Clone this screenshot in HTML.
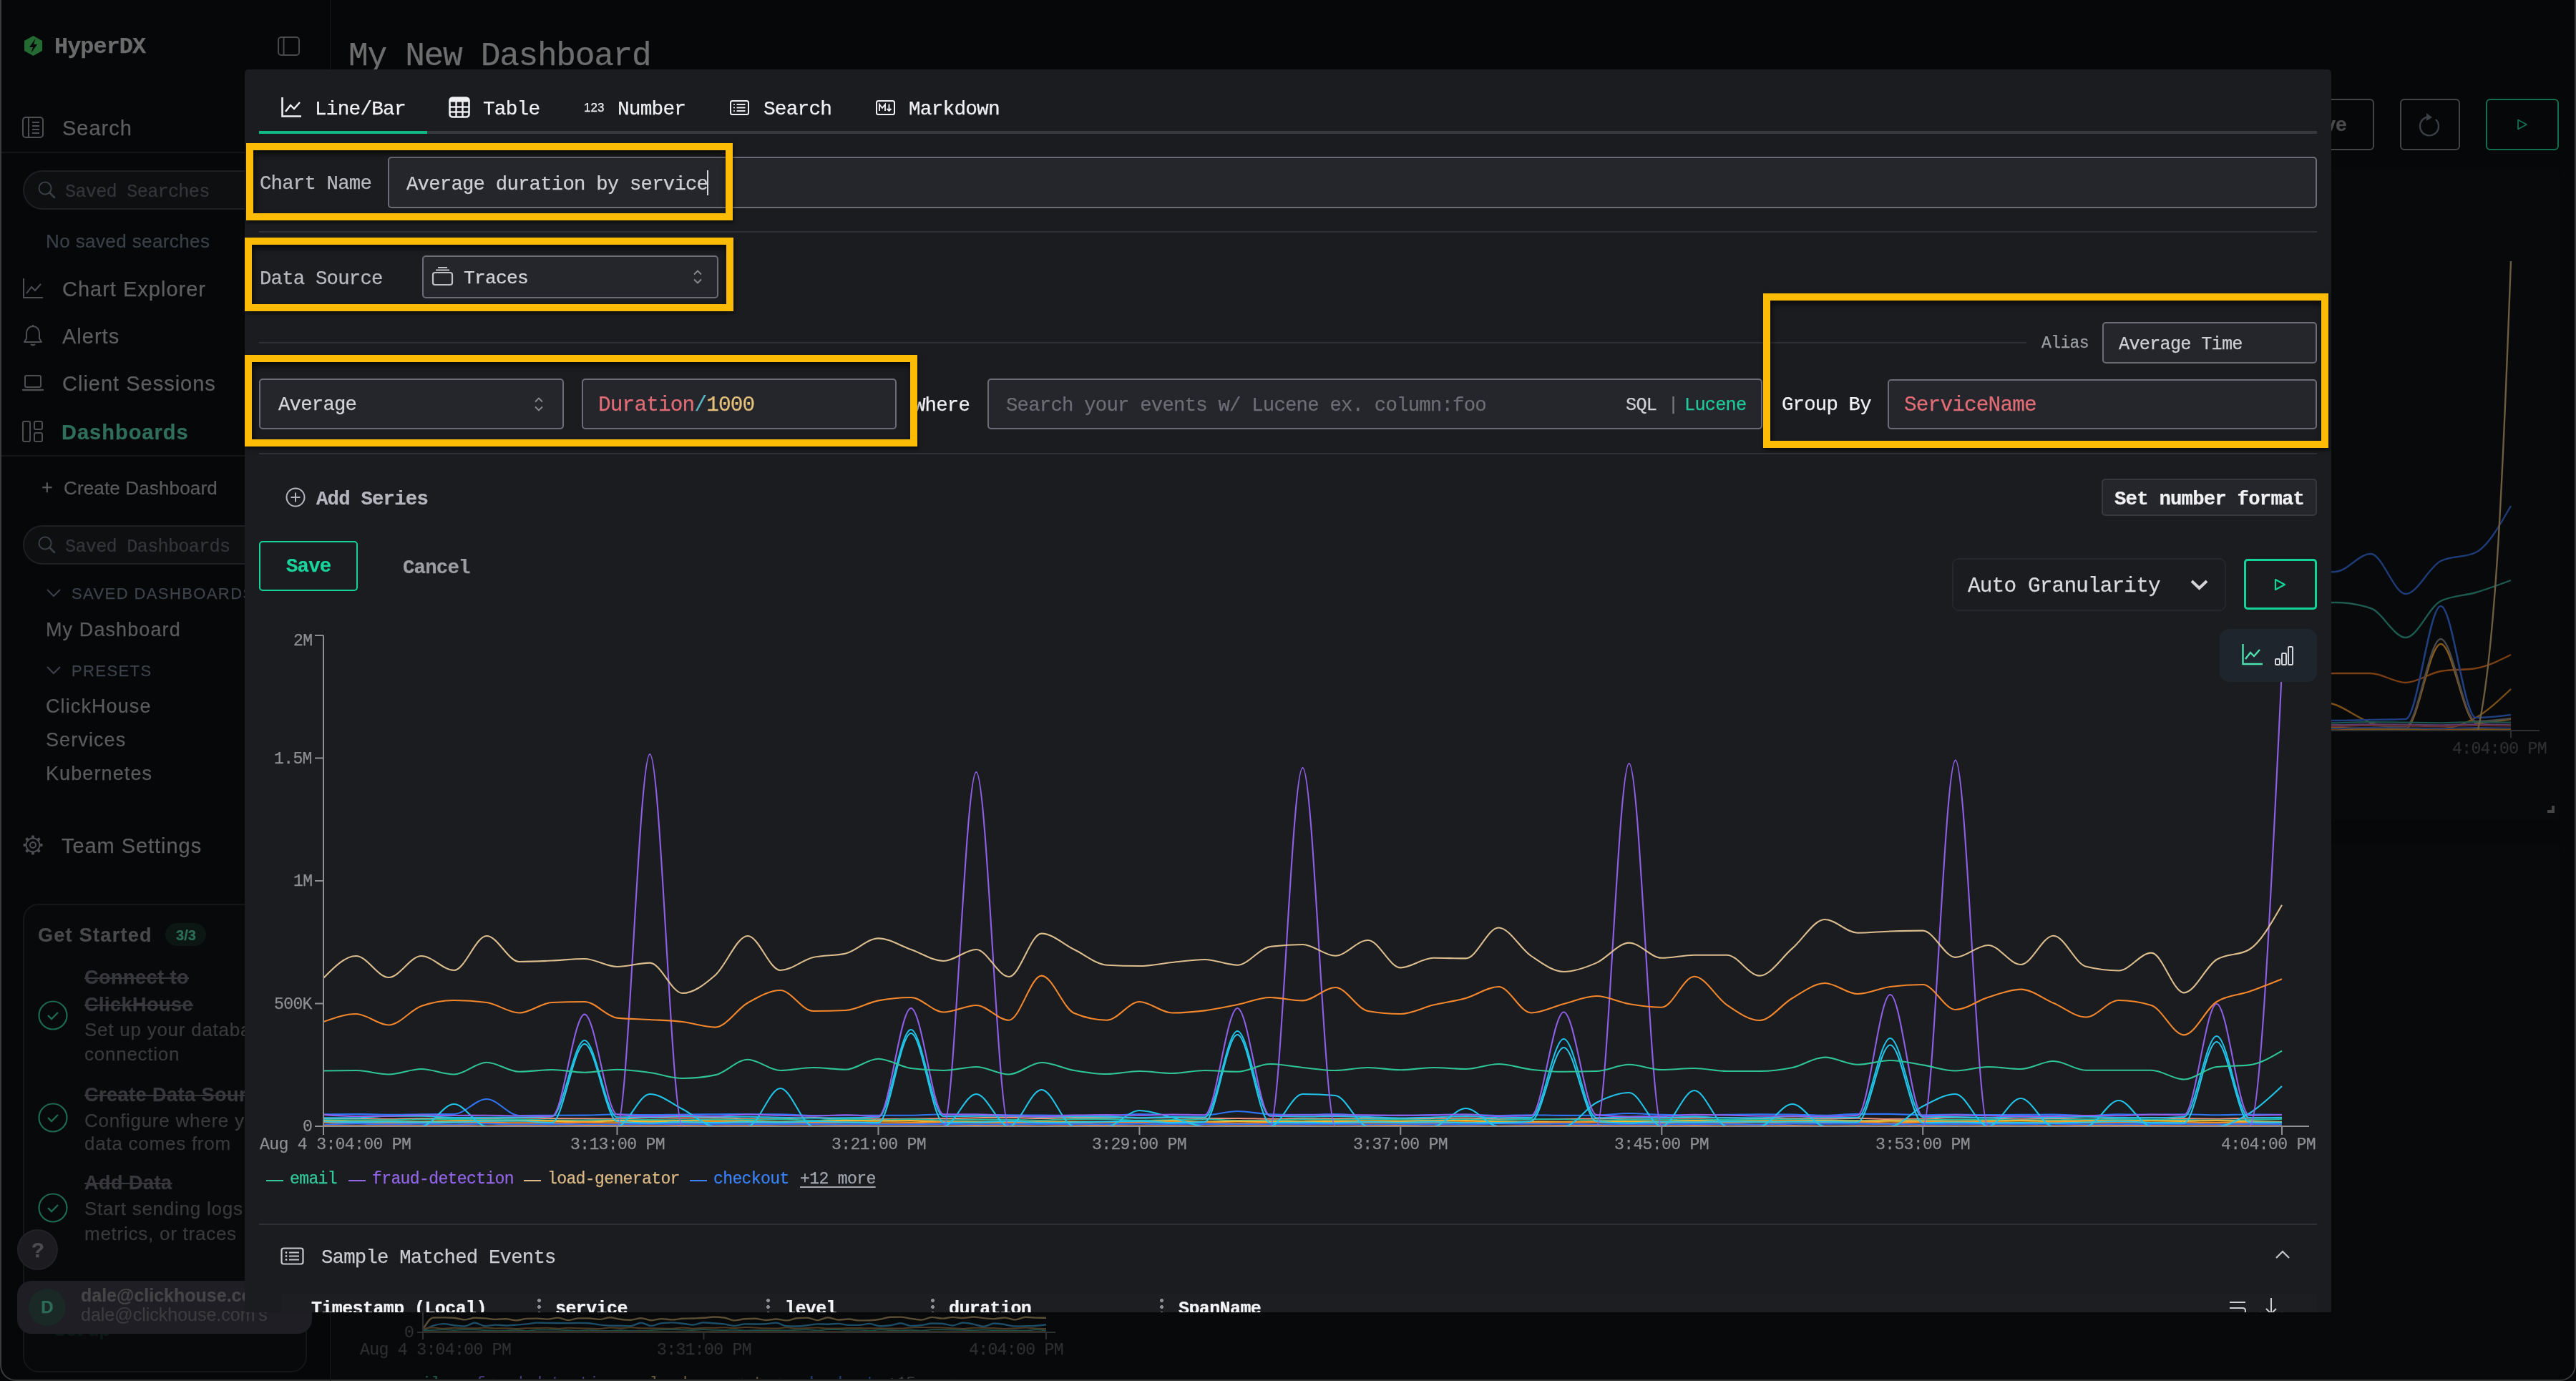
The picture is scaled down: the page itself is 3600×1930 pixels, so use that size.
<!DOCTYPE html><html><head><meta charset="utf-8"><style>
html,body{margin:0;padding:0;}
body{width:3600px;height:1930px;overflow:hidden;background:#060709;position:relative;}
.t{position:absolute;white-space:pre;-webkit-text-stroke:0.25px currentColor;will-change:transform;}
.b{position:absolute;box-sizing:border-box;}
.s{position:absolute;overflow:visible;}
</style></head><body>
<div class="b" style="left:0px;top:-40px;width:3600px;height:1970px;border:2px solid #3a3b3b;border-top:none;border-radius:0 0 22px 22px;"></div>
<div class="b" style="left:461px;top:0px;width:1px;height:1930px;background:#17181b;"></div>
<div class="b" style="left:2px;top:212px;width:459px;height:2px;background:#141517;"></div>
<div class="b" style="left:2px;top:636px;width:459px;height:2px;background:#141517;"></div>
<svg class="s" style="left:33px;top:49px;" width="27" height="30" viewBox="0 0 27 30"><polygon points="13.5,1 26,8 26,22 13.5,29 1,22 1,8" fill="#246a33"/><path d="M16.5,5 L8,17 L13,17 L10.5,25 L19,13 L14,13 Z" fill="#060709"/></svg>
<div class="t" style="left:76.0px;top:50.6px;font:700 31.815px/31.815px 'Liberation Mono', monospace;color:#6b6b6b;letter-spacing:-0.91px;">HyperDX</div>
<svg class="s" style="left:387px;top:50px;" width="33" height="29" viewBox="0 0 33 29"><rect x="2" y="2" width="29" height="25" rx="4" fill="none" stroke="#4a4a4b" stroke-width="2"/><line x1="9.5" y1="2" x2="9.5" y2="27" stroke="#4a4a4b" stroke-width="2"/></svg>
<svg class="s" style="left:30px;top:162px;" width="32" height="32" viewBox="0 0 32 32"><rect x="2" y="2" width="28" height="28" rx="4" fill="none" stroke="#4c4e52" stroke-width="2"/><line x1="10" y1="2" x2="10" y2="30" stroke="#4c4e52" stroke-width="2"/><line x1="15" y1="9" x2="25" y2="9" stroke="#4c4e52" stroke-width="2"/><line x1="15" y1="14" x2="25" y2="14" stroke="#4c4e52" stroke-width="2"/><line x1="15" y1="19" x2="25" y2="19" stroke="#4c4e52" stroke-width="2"/><line x1="15" y1="24" x2="25" y2="24" stroke="#4c4e52" stroke-width="2"/></svg>
<div class="t" style="left:87.0px;top:165.4px;font:400 29px/29px 'Liberation Sans', sans-serif;color:#5e5e5f;letter-spacing:1px;">Search</div>
<div class="b" style="left:32px;top:238px;width:420px;height:55px;border:2px solid #1e1f22;border-radius:28px;background:#0e0f11;"></div>
<svg class="s" style="left:52px;top:253px;" width="28" height="26" viewBox="0 0 28 26"><circle cx="11" cy="10" r="8.5" fill="none" stroke="#3a3f46" stroke-width="2"/><line x1="17" y1="16" x2="24" y2="23" stroke="#3a3f46" stroke-width="2.5" stroke-linecap="round"/></svg>
<div class="t" style="left:91.0px;top:255.7px;font:400 25.200000000000003px/25.200000000000003px 'Liberation Mono', monospace;color:#34363a;letter-spacing:-0.72px;">Saved Searches</div>
<div class="t" style="left:64.0px;top:324.0px;font:400 26px/26px 'Liberation Sans', sans-serif;color:#3a4048;letter-spacing:0.4px;">No saved searches</div>
<svg class="s" style="left:30px;top:387px;" width="32" height="32" viewBox="0 0 32 32"><path d="M3,2 V29 H30" fill="none" stroke="#4c4e52" stroke-width="2"/><path d="M7,23 L14,14 L19,19 L27,10" fill="none" stroke="#4c4e52" stroke-width="2"/></svg>
<div class="t" style="left:87.0px;top:390.4px;font:400 29px/29px 'Liberation Sans', sans-serif;color:#5e5e5f;letter-spacing:1px;">Chart Explorer</div>
<svg class="s" style="left:32px;top:453px;" width="28" height="32" viewBox="0 0 28 32"><path d="M14,3 C8,3 5,8 5,13 V20 L2,25 H26 L23,20 V13 C23,8 20,3 14,3 Z" fill="none" stroke="#4c4e52" stroke-width="2" stroke-linejoin="round"/><path d="M11,28 Q14,31 17,28" fill="#4c4e52" stroke="#4c4e52" stroke-width="2"/><line x1="14" y1="1" x2="14" y2="3" stroke="#4c4e52" stroke-width="2"/></svg>
<div class="t" style="left:87.0px;top:456.4px;font:400 29px/29px 'Liberation Sans', sans-serif;color:#5e5e5f;letter-spacing:1px;">Alerts</div>
<svg class="s" style="left:30px;top:522px;" width="32" height="28" viewBox="0 0 32 28"><rect x="5" y="3" width="22" height="16" rx="2" fill="none" stroke="#4c4e52" stroke-width="2"/><line x1="2" y1="23" x2="30" y2="23" stroke="#4c4e52" stroke-width="2.4" stroke-linecap="round"/></svg>
<div class="t" style="left:87.0px;top:522.4px;font:400 29px/29px 'Liberation Sans', sans-serif;color:#5e5e5f;letter-spacing:1px;">Client Sessions</div>
<svg class="s" style="left:30px;top:587px;" width="32" height="32" viewBox="0 0 32 32"><rect x="2" y="2" width="10" height="28" rx="2" fill="none" stroke="#4c4e52" stroke-width="2"/><rect x="18" y="2" width="11" height="11" rx="2" fill="none" stroke="#4c4e52" stroke-width="2"/><rect x="18" y="18" width="11" height="12" rx="2" fill="none" stroke="#4c4e52" stroke-width="2"/></svg>
<div class="t" style="left:86.0px;top:590.4px;font:700 29px/29px 'Liberation Sans', sans-serif;color:#2e6e5b;letter-spacing:1px;">Dashboards</div>
<div class="t" style="left:58.0px;top:668.1px;font:400 27px/27px 'Liberation Sans', sans-serif;color:#5a5a5b;">+</div>
<div class="t" style="left:89.0px;top:669.0px;font:400 26px/26px 'Liberation Sans', sans-serif;color:#5a5a5b;letter-spacing:0.15px;">Create Dashboard</div>
<div class="b" style="left:32px;top:734px;width:420px;height:55px;border:2px solid #1e1f22;border-radius:28px;background:#0e0f11;"></div>
<svg class="s" style="left:52px;top:749px;" width="28" height="26" viewBox="0 0 28 26"><circle cx="11" cy="10" r="8.5" fill="none" stroke="#3a3f46" stroke-width="2"/><line x1="17" y1="16" x2="24" y2="23" stroke="#3a3f46" stroke-width="2.5" stroke-linecap="round"/></svg>
<div class="t" style="left:91.0px;top:751.7px;font:400 25.200000000000003px/25.200000000000003px 'Liberation Mono', monospace;color:#34363a;letter-spacing:-0.72px;">Saved Dashboards</div>
<svg class="s" style="left:64px;top:822px;" width="22" height="14" viewBox="0 0 22 14"><path d="M2,2 L11,11 L20,2" fill="none" stroke="#3d434b" stroke-width="2"/></svg>
<div class="t" style="left:100.0px;top:819.4px;font:400 22px/22px 'Liberation Sans', sans-serif;color:#3d434b;letter-spacing:1.4px;">SAVED DASHBOARDS</div>
<div class="t" style="left:64.0px;top:867.1px;font:400 27px/27px 'Liberation Sans', sans-serif;color:#5a5b5d;letter-spacing:1.1px;">My Dashboard</div>
<svg class="s" style="left:64px;top:930px;" width="22" height="14" viewBox="0 0 22 14"><path d="M2,2 L11,11 L20,2" fill="none" stroke="#3d434b" stroke-width="2"/></svg>
<div class="t" style="left:100.0px;top:927.4px;font:400 22px/22px 'Liberation Sans', sans-serif;color:#3d434b;letter-spacing:1.4px;">PRESETS</div>
<div class="t" style="left:64.0px;top:974.1px;font:400 27px/27px 'Liberation Sans', sans-serif;color:#5a5b5d;letter-spacing:1.1px;">ClickHouse</div>
<div class="t" style="left:64.0px;top:1021.1px;font:400 27px/27px 'Liberation Sans', sans-serif;color:#5a5b5d;letter-spacing:1.1px;">Services</div>
<div class="t" style="left:64.0px;top:1068.1px;font:400 27px/27px 'Liberation Sans', sans-serif;color:#5a5b5d;letter-spacing:1.1px;">Kubernetes</div>
<svg class="s" style="left:32px;top:1167px;" width="28" height="28" viewBox="0 0 28 28"><rect x="12" y="0.5" width="4" height="6" rx="1" transform="rotate(0 14 14)" fill="#4c4e52"/><rect x="12" y="0.5" width="4" height="6" rx="1" transform="rotate(45 14 14)" fill="#4c4e52"/><rect x="12" y="0.5" width="4" height="6" rx="1" transform="rotate(90 14 14)" fill="#4c4e52"/><rect x="12" y="0.5" width="4" height="6" rx="1" transform="rotate(135 14 14)" fill="#4c4e52"/><rect x="12" y="0.5" width="4" height="6" rx="1" transform="rotate(180 14 14)" fill="#4c4e52"/><rect x="12" y="0.5" width="4" height="6" rx="1" transform="rotate(225 14 14)" fill="#4c4e52"/><rect x="12" y="0.5" width="4" height="6" rx="1" transform="rotate(270 14 14)" fill="#4c4e52"/><rect x="12" y="0.5" width="4" height="6" rx="1" transform="rotate(315 14 14)" fill="#4c4e52"/><circle cx="14" cy="14" r="9.5" fill="#060709" stroke="#4c4e52" stroke-width="2"/><circle cx="14" cy="14" r="4" fill="none" stroke="#4c4e52" stroke-width="2"/></svg>
<div class="t" style="left:86.0px;top:1168.4px;font:400 29px/29px 'Liberation Sans', sans-serif;color:#5e5e5f;letter-spacing:0.95px;">Team Settings</div>
<div class="b" style="left:32px;top:1263px;width:397px;height:655px;border:2px solid #151618;border-radius:22px;background:#08090a;"></div>
<div class="t" style="left:53.0px;top:1294.1px;font:700 27px/27px 'Liberation Sans', sans-serif;color:#4a4a4d;letter-spacing:1.3px;">Get Started</div>
<div class="b" style="left:231px;top:1290px;width:57px;height:32px;background:#0c1613;border-radius:16px;"></div>
<div class="t" style="left:-740.5px;width:2000px;text-align:center;top:1297.1px;font:700 20px/20px 'Liberation Sans', sans-serif;color:#2b6f57;">3/3</div>
<svg class="s" style="left:53px;top:1398px;" width="42" height="42" viewBox="0 0 42 42"><circle cx="21" cy="21" r="19.5" fill="none" stroke="#1d6a4f" stroke-width="2.2"/><path d="M14,21 L19,26 L28,17" fill="none" stroke="#1d6a4f" stroke-width="2.4"/></svg>
<div class="t" style="left:118.0px;top:1353.1px;font:700 27px/27px 'Liberation Sans', sans-serif;color:#38383c;text-decoration:line-through;text-decoration-thickness:2px;letter-spacing:0.5px;">Connect to</div>
<div class="t" style="left:118.0px;top:1391.1px;font:700 27px/27px 'Liberation Sans', sans-serif;color:#38383c;text-decoration:line-through;text-decoration-thickness:2px;letter-spacing:0.5px;">ClickHouse</div>
<div class="t" style="left:118.0px;top:1426.0px;font:400 26px/26px 'Liberation Sans', sans-serif;color:#3a3a3d;letter-spacing:0.75px;">Set up your database</div>
<div class="t" style="left:118.0px;top:1460.0px;font:400 26px/26px 'Liberation Sans', sans-serif;color:#3a3a3d;letter-spacing:0.75px;">connection</div>
<svg class="s" style="left:53px;top:1541px;" width="42" height="42" viewBox="0 0 42 42"><circle cx="21" cy="21" r="19.5" fill="none" stroke="#1d6a4f" stroke-width="2.2"/><path d="M14,21 L19,26 L28,17" fill="none" stroke="#1d6a4f" stroke-width="2.4"/></svg>
<div class="t" style="left:118.0px;top:1517.1px;font:700 27px/27px 'Liberation Sans', sans-serif;color:#38383c;text-decoration:line-through;text-decoration-thickness:2px;letter-spacing:0.5px;">Create Data Source</div>
<div class="t" style="left:118.0px;top:1553.0px;font:400 26px/26px 'Liberation Sans', sans-serif;color:#3a3a3d;letter-spacing:0.75px;">Configure where your</div>
<div class="t" style="left:118.0px;top:1585.0px;font:400 26px/26px 'Liberation Sans', sans-serif;color:#3a3a3d;letter-spacing:0.75px;">data comes from</div>
<svg class="s" style="left:53px;top:1667px;" width="42" height="42" viewBox="0 0 42 42"><circle cx="21" cy="21" r="19.5" fill="none" stroke="#1d6a4f" stroke-width="2.2"/><path d="M14,21 L19,26 L28,17" fill="none" stroke="#1d6a4f" stroke-width="2.4"/></svg>
<div class="t" style="left:118.0px;top:1640.1px;font:700 27px/27px 'Liberation Sans', sans-serif;color:#38383c;text-decoration:line-through;text-decoration-thickness:2px;letter-spacing:0.5px;">Add Data</div>
<div class="t" style="left:118.0px;top:1676.0px;font:400 26px/26px 'Liberation Sans', sans-serif;color:#3a3a3d;letter-spacing:0.75px;">Start sending logs,</div>
<div class="t" style="left:118.0px;top:1711.0px;font:400 26px/26px 'Liberation Sans', sans-serif;color:#3a3a3d;letter-spacing:0.75px;">metrics, or traces</div>
<div class="t" style="left:75.0px;top:1845.0px;font:700 26px/26px 'Liberation Sans', sans-serif;color:#0c1a15;">Set up</div>
<div class="b" style="left:24px;top:1718px;width:57px;height:57px;border-radius:50%;background:#1c1c20;border:2px solid #222226;"></div>
<div class="t" style="left:-947.5px;width:2000px;text-align:center;top:1731.6px;font:700 30px/30px 'Liberation Sans', sans-serif;color:#4d4d50;">?</div>
<div class="b" style="left:24px;top:1790px;width:412px;height:74px;background:#1e1e24;border-radius:20px;"></div>
<div class="b" style="left:40px;top:1801px;width:52px;height:52px;background:#1b2926;border-radius:50%;"></div>
<div class="t" style="left:-934.0px;width:2000px;text-align:center;top:1814.7px;font:700 24px/24px 'Liberation Sans', sans-serif;color:#2d6b59;">D</div>
<div class="t" style="left:113.0px;top:1797.8px;font:700 25px/25px 'Liberation Sans', sans-serif;color:#454548;">dale@clickhouse.com</div>
<div class="t" style="left:113.0px;top:1824.8px;font:400 25px/25px 'Liberation Sans', sans-serif;color:#3c3c3f;">dale@clickhouse.com&#x27;s</div>
<div class="t" style="left:487.0px;top:55.6px;font:400 46.2px/46.2px 'Liberation Mono', monospace;color:#6c6d6c;letter-spacing:-1.32px;">My New Dashboard</div>
<div class="b" style="left:3180px;top:138px;width:138px;height:72px;border:2px solid #434446;border-radius:6px;"></div>
<div class="t" style="left:2247.0px;width:2000px;text-align:center;top:160.3px;font:700 28px/28px 'Liberation Sans', sans-serif;color:#4a4a4c;">Save</div>
<div class="b" style="left:3354px;top:138px;width:84px;height:72px;border:2px solid #434446;border-radius:6px;"></div>
<svg class="s" style="left:3380px;top:155px;" width="34" height="38" viewBox="0 0 34 38"><path d="M24,12 A13,13 0 1 1 13,8.5" fill="none" stroke="#3c4148" stroke-width="2.4"/><path d="M11,3 L19,9 L11,14 Z" fill="#3c4148"/></svg>
<div class="b" style="left:3474px;top:138px;width:102px;height:72px;border:2px solid #13704e;border-radius:6px;"></div>
<svg class="s" style="left:3517px;top:166px;" width="16" height="16" viewBox="0 0 16 16"><path d="M2,1.5 L14,8 L2,14.5 Z" fill="none" stroke="#13704e" stroke-width="1.8" stroke-linejoin="round"/></svg>
<div class="b" style="left:470px;top:236px;width:3107px;height:910px;background:#08090b;border-radius:6px;"></div>
<div class="b" style="left:462px;top:1180px;width:3115px;height:747px;background:#08090b;border-radius:6px;"></div>
<div class="b" style="left:3560px;top:1126px;width:10px;height:10px;background:#454546;clip-path:polygon(100% 0,100% 100%,0 100%,0 60%,60% 60%,60% 0);"></div>
<svg class="s" style="left:0;top:0" width="3600" height="1930" viewBox="0 0 3600 1930"><path d="M3166.0,985.0C3182.3,980.0 3198.7,975.0 3215.0,975.0C3231.3,975.0 3247.7,979.2 3264.0,985.0C3280.3,990.8 3296.7,1004.7 3313.0,1010.0C3329.3,1015.3 3345.7,1018.0 3362.0,1018.0C3378.3,1018.0 3394.7,1018.0 3411.0,1018.0C3427.3,1018.0 3443.7,1012.2 3460.0,1003.0C3476.3,993.8 3492.7,978.4 3509.0,963.0" fill="none" stroke="#7a4f18" stroke-width="2.4"/><path d="M3166.0,945.0C3182.3,944.3 3198.7,943.7 3215.0,943.0C3231.3,942.3 3247.7,941.0 3264.0,941.0C3280.3,941.0 3296.7,941.0 3313.0,941.0C3329.3,941.0 3345.7,954.0 3362.0,954.0C3378.3,954.0 3394.7,940.7 3411.0,938.0C3427.3,935.3 3443.7,936.7 3460.0,934.0C3476.3,931.3 3492.7,923.2 3509.0,915.0" fill="none" stroke="#7b3f14" stroke-width="2.4"/><path d="M3166.0,845.0C3182.3,844.2 3198.7,843.5 3215.0,843.0C3231.3,842.5 3247.7,842.0 3264.0,842.0C3280.3,842.0 3296.7,844.7 3313.0,850.0C3329.3,855.3 3345.7,891.0 3362.0,891.0C3378.3,891.0 3394.7,848.0 3411.0,840.0C3427.3,832.0 3443.7,832.8 3460.0,828.0C3476.3,823.2 3492.7,817.1 3509.0,811.0" fill="none" stroke="#1d5a50" stroke-width="2.4"/><path d="M3166.0,805.0C3182.3,802.8 3198.7,800.7 3215.0,800.0C3231.3,799.3 3247.7,799.7 3264.0,799.0C3280.3,798.3 3296.7,774.0 3313.0,774.0C3329.3,774.0 3345.7,830.0 3362.0,830.0C3378.3,830.0 3394.7,792.0 3411.0,784.0C3427.3,776.0 3443.7,780.0 3460.0,772.0C3476.3,764.0 3492.7,735.5 3509.0,707.0" fill="none" stroke="#1e3d78" stroke-width="2.4"/><path d="M3166.0,1016.0C3182.3,1016.0 3198.7,1016.0 3215.0,1016.0C3231.3,1016.0 3247.7,1016.7 3264.0,1017.0C3280.3,1017.3 3296.7,1018.0 3313.0,1018.0C3329.3,1018.0 3345.7,1018.0 3362.0,1018.0C3378.3,1018.0 3394.7,900.0 3411.0,900.0C3427.3,900.0 3443.7,1010.0 3460.0,1010.0C3476.3,1010.0 3492.7,1007.5 3509.0,1005.0" fill="none" stroke="#8a5a18" stroke-width="2.4"/><path d="M3166.0,1012.0C3182.3,1012.0 3198.7,1012.0 3215.0,1012.0C3231.3,1012.0 3247.7,1012.7 3264.0,1013.0C3280.3,1013.3 3296.7,1013.7 3313.0,1014.0C3329.3,1014.3 3345.7,1015.0 3362.0,1015.0C3378.3,1015.0 3394.7,893.0 3411.0,893.0C3427.3,893.0 3443.7,1008.0 3460.0,1008.0C3476.3,1008.0 3492.7,1006.0 3509.0,1004.0" fill="none" stroke="#4a4a4c" stroke-width="2.4"/><path d="M3166.0,1006.0C3182.3,1006.0 3198.7,1006.0 3215.0,1006.0C3231.3,1006.0 3247.7,1007.0 3264.0,1007.0C3280.3,1007.0 3296.7,1006.3 3313.0,1006.0C3329.3,1005.7 3345.7,1005.7 3362.0,1005.0C3378.3,1004.3 3394.7,847.0 3411.0,847.0C3427.3,847.0 3443.7,1003.0 3460.0,1003.0C3476.3,1003.0 3492.7,1001.0 3509.0,999.0" fill="none" stroke="#1f3f80" stroke-width="2.6"/><path d="M3166.0,1009.0C3182.3,1009.2 3198.7,1009.4 3215.0,1009.6C3231.3,1009.8 3247.7,1010.2 3264.0,1010.2C3280.3,1010.2 3296.7,1009.0 3313.0,1009.0C3329.3,1009.0 3345.7,1009.4 3362.0,1009.6C3378.3,1009.8 3394.7,1010.2 3411.0,1010.2C3427.3,1010.2 3443.7,1009.0 3460.0,1009.0C3476.3,1009.0 3492.7,1009.3 3509.0,1009.6" fill="none" stroke="#1d5a50" stroke-width="2"/><path d="M3166.0,1012.0C3182.3,1012.2 3198.7,1012.4 3215.0,1012.6C3231.3,1012.8 3247.7,1013.2 3264.0,1013.2C3280.3,1013.2 3296.7,1012.0 3313.0,1012.0C3329.3,1012.0 3345.7,1012.4 3362.0,1012.6C3378.3,1012.8 3394.7,1013.2 3411.0,1013.2C3427.3,1013.2 3443.7,1012.0 3460.0,1012.0C3476.3,1012.0 3492.7,1012.3 3509.0,1012.6" fill="none" stroke="#5a3a6a" stroke-width="2"/><path d="M3166.0,1014.0C3182.3,1014.2 3198.7,1014.4 3215.0,1014.6C3231.3,1014.8 3247.7,1015.2 3264.0,1015.2C3280.3,1015.2 3296.7,1014.0 3313.0,1014.0C3329.3,1014.0 3345.7,1014.4 3362.0,1014.6C3378.3,1014.8 3394.7,1015.2 3411.0,1015.2C3427.3,1015.2 3443.7,1014.0 3460.0,1014.0C3476.3,1014.0 3492.7,1014.3 3509.0,1014.6" fill="none" stroke="#6a3030" stroke-width="2"/><path d="M3166.0,1017.0C3182.3,1017.2 3198.7,1017.4 3215.0,1017.6C3231.3,1017.8 3247.7,1018.2 3264.0,1018.2C3280.3,1018.2 3296.7,1017.0 3313.0,1017.0C3329.3,1017.0 3345.7,1017.4 3362.0,1017.6C3378.3,1017.8 3394.7,1018.2 3411.0,1018.2C3427.3,1018.2 3443.7,1017.0 3460.0,1017.0C3476.3,1017.0 3492.7,1017.3 3509.0,1017.6" fill="none" stroke="#1e3d78" stroke-width="2"/><path d="M3166.0,1019.0C3182.3,1019.2 3198.7,1019.4 3215.0,1019.6C3231.3,1019.8 3247.7,1020.2 3264.0,1020.2C3280.3,1020.2 3296.7,1019.0 3313.0,1019.0C3329.3,1019.0 3345.7,1019.4 3362.0,1019.6C3378.3,1019.8 3394.7,1020.2 3411.0,1020.2C3427.3,1020.2 3443.7,1019.0 3460.0,1019.0C3476.3,1019.0 3492.7,1019.3 3509.0,1019.6" fill="none" stroke="#7a4f18" stroke-width="2"/><path d="M3463,1020 C3490,900 3500,600 3509,365" fill="none" stroke="#6d5d3f" stroke-width="2.4"/><path d="M3258,1021 H3549 M3509,1021 V1031" stroke="#2e2f31" stroke-width="2" fill="none"/></svg>
<div class="t" style="right:41.0px;top:1036.3px;font:400 23.1px/23.1px 'Liberation Mono', monospace;color:#2e2f30;letter-spacing:-0.66px;">4:04:00 PM</div>
<svg class="s" style="left:0;top:0" width="3600" height="1930" viewBox="0 0 3600 1930"><path d="M591.0,1858.0C595.8,1849.8 600.7,1841.6 605.5,1841.5C610.4,1841.4 615.2,1841.4 620.0,1841.4C624.9,1841.4 629.7,1841.5 634.5,1841.7C639.4,1842.0 644.2,1844.3 649.1,1844.3C653.9,1844.3 658.7,1841.8 663.6,1841.8C668.4,1841.8 673.3,1842.1 678.1,1842.4C682.9,1842.8 687.8,1843.9 692.6,1843.9C697.5,1843.9 702.3,1843.2 707.1,1843.2C712.0,1843.2 716.8,1845.2 721.6,1845.2C726.5,1845.2 731.3,1843.2 736.2,1842.9C741.0,1842.7 745.8,1842.6 750.7,1842.6C755.5,1842.6 760.4,1843.6 765.2,1843.6C770.0,1843.6 774.9,1841.6 779.7,1841.6C784.6,1841.6 789.4,1845.0 794.2,1845.0C799.1,1845.0 803.9,1842.4 808.8,1842.4C813.6,1842.4 818.4,1842.4 823.3,1842.4C828.1,1842.5 832.9,1843.9 837.8,1843.9C842.6,1843.9 847.5,1841.3 852.3,1841.3C857.1,1841.3 862.0,1843.2 866.8,1843.8C871.7,1844.4 876.5,1844.7 881.3,1844.7C886.2,1844.7 891.0,1842.2 895.9,1842.2C900.7,1842.2 905.5,1845.2 910.4,1845.2C915.2,1845.2 920.0,1843.1 924.9,1843.1C929.7,1843.1 934.6,1844.4 939.4,1844.4C944.2,1844.4 949.1,1843.1 953.9,1842.8C958.8,1842.6 963.6,1842.7 968.4,1842.5C973.3,1842.3 978.1,1842.2 983.0,1841.8C987.8,1841.5 992.6,1840.5 997.5,1840.5C1002.3,1840.5 1007.1,1840.9 1012.0,1841.5C1016.8,1842.2 1021.7,1845.4 1026.5,1845.4C1031.3,1845.4 1036.2,1843.4 1041.0,1843.2C1045.9,1842.9 1050.7,1842.8 1055.5,1842.8C1060.4,1842.8 1065.2,1845.0 1070.0,1845.0C1074.9,1845.0 1079.7,1843.5 1084.6,1843.5C1089.4,1843.5 1094.2,1845.4 1099.1,1845.4C1103.9,1845.4 1108.8,1842.8 1113.6,1842.3C1118.4,1841.8 1123.3,1841.6 1128.1,1841.6C1133.0,1841.6 1137.8,1845.1 1142.6,1845.1C1147.5,1845.1 1152.3,1841.3 1157.2,1841.3C1162.0,1841.3 1166.8,1844.5 1171.7,1844.5C1176.5,1844.5 1181.3,1843.5 1186.2,1843.5C1191.0,1843.5 1195.9,1845.4 1200.7,1845.4C1205.5,1845.4 1210.4,1845.3 1215.2,1845.2C1220.1,1845.1 1224.9,1844.6 1229.7,1843.8C1234.6,1843.0 1239.4,1840.7 1244.2,1840.7C1249.1,1840.6 1253.9,1840.6 1258.8,1840.6C1263.6,1840.6 1268.4,1842.2 1273.3,1842.9C1278.1,1843.5 1283.0,1844.6 1287.8,1844.6C1292.6,1844.6 1297.5,1840.9 1302.3,1840.9C1307.2,1840.9 1312.0,1842.6 1316.8,1842.6C1321.7,1842.6 1326.5,1840.9 1331.3,1840.9C1336.2,1840.9 1341.0,1842.0 1345.9,1842.0C1350.7,1842.0 1355.5,1840.5 1360.4,1840.5C1365.2,1840.5 1370.1,1841.7 1374.9,1842.1C1379.7,1842.6 1384.6,1843.1 1389.4,1843.1C1394.3,1843.1 1399.1,1841.5 1403.9,1841.5C1408.8,1841.5 1413.6,1844.4 1418.5,1844.4C1423.3,1844.4 1428.1,1840.8 1433.0,1840.8C1437.8,1840.8 1442.6,1841.4 1447.5,1841.6C1452.3,1841.7 1457.2,1841.7 1462.0,1841.8" fill="none" stroke="#5b4e35" stroke-width="2.4"/><path d="M591.0,1860.0C595.8,1857.1 600.7,1854.2 605.5,1852.6C610.4,1850.9 615.2,1850.1 620.0,1850.1C624.9,1850.1 629.7,1851.6 634.5,1852.2C639.4,1852.7 644.2,1853.5 649.1,1853.5C653.9,1853.5 658.7,1848.8 663.6,1848.8C668.4,1848.8 673.3,1853.2 678.1,1853.2C682.9,1853.2 687.8,1851.6 692.6,1851.6C697.5,1851.6 702.3,1852.5 707.1,1852.5C712.0,1852.5 716.8,1852.0 721.6,1851.6C726.5,1851.3 731.3,1851.0 736.2,1850.4C741.0,1849.9 745.8,1848.6 750.7,1848.6C755.5,1848.6 760.4,1848.8 765.2,1848.9C770.0,1848.9 774.9,1849.0 779.7,1849.0C784.6,1849.1 789.4,1849.1 794.2,1849.1C799.1,1849.1 803.9,1848.9 808.8,1848.9C813.6,1848.9 818.4,1849.0 823.3,1849.2C828.1,1849.5 832.9,1850.8 837.8,1851.4C842.6,1851.9 847.5,1852.5 852.3,1852.6C857.1,1852.7 862.0,1852.7 866.8,1852.8C871.7,1852.9 876.5,1853.1 881.3,1853.1C886.2,1853.1 891.0,1848.7 895.9,1848.7C900.7,1848.7 905.5,1852.9 910.4,1852.9C915.2,1852.9 920.0,1849.6 924.9,1849.1C929.7,1848.7 934.6,1848.4 939.4,1848.4C944.2,1848.4 949.1,1849.2 953.9,1849.7C958.8,1850.2 963.6,1851.5 968.4,1851.5C973.3,1851.5 978.1,1848.3 983.0,1848.3C987.8,1848.3 992.6,1848.9 997.5,1849.3C1002.3,1849.6 1007.1,1849.8 1012.0,1850.4C1016.8,1851.0 1021.7,1852.9 1026.5,1852.9C1031.3,1852.9 1036.2,1850.4 1041.0,1850.4C1045.9,1850.4 1050.7,1850.5 1055.5,1850.5C1060.4,1850.5 1065.2,1850.4 1070.0,1850.2C1074.9,1850.1 1079.7,1848.6 1084.6,1848.6C1089.4,1848.6 1094.2,1853.1 1099.1,1853.3C1103.9,1853.5 1108.8,1853.5 1113.6,1853.5C1118.4,1853.5 1123.3,1852.9 1128.1,1852.3C1133.0,1851.8 1137.8,1850.4 1142.6,1850.4C1147.5,1850.4 1152.3,1850.7 1157.2,1850.7C1162.0,1850.7 1166.8,1849.9 1171.7,1849.9C1176.5,1849.9 1181.3,1851.9 1186.2,1851.9C1191.0,1851.9 1195.9,1851.9 1200.7,1851.9C1205.5,1851.9 1210.4,1849.9 1215.2,1849.9C1220.1,1849.9 1224.9,1853.2 1229.7,1853.2C1234.6,1853.2 1239.4,1852.9 1244.2,1852.3C1249.1,1851.7 1253.9,1849.3 1258.8,1849.3C1263.6,1849.3 1268.4,1852.9 1273.3,1852.9C1278.1,1852.9 1283.0,1852.6 1287.8,1852.0C1292.6,1851.5 1297.5,1849.5 1302.3,1849.5C1307.2,1849.5 1312.0,1849.6 1316.8,1849.8C1321.7,1850.0 1326.5,1852.5 1331.3,1852.5C1336.2,1852.5 1341.0,1848.5 1345.9,1848.5C1350.7,1848.5 1355.5,1849.7 1360.4,1850.6C1365.2,1851.5 1370.1,1853.8 1374.9,1853.8C1379.7,1853.8 1384.6,1849.5 1389.4,1849.5C1394.3,1849.5 1399.1,1850.4 1403.9,1851.0C1408.8,1851.7 1413.6,1853.4 1418.5,1853.4C1423.3,1853.4 1428.1,1853.4 1433.0,1853.2C1437.8,1853.1 1442.6,1853.1 1447.5,1852.7C1452.3,1852.4 1457.2,1851.8 1462.0,1851.2" fill="none" stroke="#1c4d66" stroke-width="2.4"/><path d="M591.0,1856.9C595.8,1856.2 600.7,1855.5 605.5,1855.5C610.4,1855.5 615.2,1856.8 620.0,1856.8C624.9,1856.8 629.7,1855.8 634.5,1855.8C639.4,1855.8 644.2,1856.3 649.1,1856.3C653.9,1856.3 658.7,1856.3 663.6,1856.2C668.4,1856.2 673.3,1855.6 678.1,1855.6C682.9,1855.6 687.8,1856.4 692.6,1856.4C697.5,1856.4 702.3,1856.2 707.1,1856.2C712.0,1856.2 716.8,1857.0 721.6,1857.0C726.5,1857.0 731.3,1856.5 736.2,1856.3C741.0,1856.2 745.8,1856.0 750.7,1855.9C755.5,1855.8 760.4,1855.8 765.2,1855.8C770.0,1855.8 774.9,1856.8 779.7,1856.8C784.6,1856.8 789.4,1855.7 794.2,1855.7C799.1,1855.7 803.9,1856.3 808.8,1856.3C813.6,1856.4 818.4,1856.4 823.3,1856.4C828.1,1856.4 832.9,1856.9 837.8,1856.9C842.6,1856.9 847.5,1855.4 852.3,1855.4C857.1,1855.4 862.0,1856.3 866.8,1856.3C871.7,1856.3 876.5,1855.3 881.3,1855.3C886.2,1855.3 891.0,1856.3 895.9,1856.3C900.7,1856.3 905.5,1856.3 910.4,1856.3C915.2,1856.3 920.0,1856.4 924.9,1856.5C929.7,1856.6 934.6,1856.7 939.4,1856.7C944.2,1856.7 949.1,1855.5 953.9,1855.5C958.8,1855.5 963.6,1856.7 968.4,1856.7C973.3,1856.7 978.1,1855.7 983.0,1855.7C987.8,1855.7 992.6,1855.8 997.5,1855.8C1002.3,1855.8 1007.1,1855.2 1012.0,1855.2C1016.8,1855.2 1021.7,1856.1 1026.5,1856.1C1031.3,1856.1 1036.2,1855.0 1041.0,1855.0C1045.9,1855.0 1050.7,1855.4 1055.5,1855.6C1060.4,1855.8 1065.2,1856.2 1070.0,1856.3C1074.9,1856.4 1079.7,1856.5 1084.6,1856.5C1089.4,1856.5 1094.2,1855.3 1099.1,1855.3C1103.9,1855.3 1108.8,1856.6 1113.6,1856.6C1118.4,1856.6 1123.3,1856.1 1128.1,1855.9C1133.0,1855.7 1137.8,1855.4 1142.6,1855.4C1147.5,1855.4 1152.3,1856.5 1157.2,1856.5C1162.0,1856.5 1166.8,1856.5 1171.7,1856.5C1176.5,1856.5 1181.3,1855.9 1186.2,1855.9C1191.0,1855.9 1195.9,1856.0 1200.7,1856.1C1205.5,1856.1 1210.4,1856.2 1215.2,1856.2C1220.1,1856.3 1224.9,1856.2 1229.7,1856.3C1234.6,1856.3 1239.4,1856.5 1244.2,1856.5C1249.1,1856.5 1253.9,1856.5 1258.8,1856.5C1263.6,1856.5 1268.4,1855.6 1273.3,1855.4C1278.1,1855.2 1283.0,1855.0 1287.8,1855.0C1292.6,1855.0 1297.5,1855.1 1302.3,1855.2C1307.2,1855.3 1312.0,1855.5 1316.8,1855.6C1321.7,1855.8 1326.5,1855.9 1331.3,1856.2C1336.2,1856.4 1341.0,1856.9 1345.9,1856.9C1350.7,1856.9 1355.5,1855.9 1360.4,1855.8C1365.2,1855.8 1370.1,1855.7 1374.9,1855.7C1379.7,1855.7 1384.6,1855.9 1389.4,1856.1C1394.3,1856.3 1399.1,1856.9 1403.9,1856.9C1408.8,1856.9 1413.6,1856.4 1418.5,1856.2C1423.3,1856.0 1428.1,1855.6 1433.0,1855.6C1437.8,1855.6 1442.6,1856.3 1447.5,1856.5C1452.3,1856.7 1457.2,1856.9 1462.0,1857.0" fill="none" stroke="#4e3a22" stroke-width="2"/><path d="M591.0,1859.6C595.8,1859.3 600.7,1859.0 605.5,1858.8C610.4,1858.6 615.2,1858.3 620.0,1858.3C624.9,1858.3 629.7,1858.9 634.5,1858.9C639.4,1858.9 644.2,1858.3 649.1,1858.3C653.9,1858.3 658.7,1858.3 663.6,1858.3C668.4,1858.3 673.3,1858.7 678.1,1858.9C682.9,1859.1 687.8,1859.7 692.6,1859.7C697.5,1859.7 702.3,1859.5 707.1,1859.4C712.0,1859.3 716.8,1858.8 721.6,1858.8C726.5,1858.8 731.3,1859.9 736.2,1859.9C741.0,1859.9 745.8,1858.4 750.7,1858.4C755.5,1858.4 760.4,1858.5 765.2,1858.5C770.0,1858.5 774.9,1858.5 779.7,1858.5C784.6,1858.6 789.4,1858.9 794.2,1859.1C799.1,1859.4 803.9,1859.8 808.8,1859.8C813.6,1859.8 818.4,1858.8 823.3,1858.8C828.1,1858.8 832.9,1859.5 837.8,1859.7C842.6,1859.8 847.5,1859.9 852.3,1859.9C857.1,1859.9 862.0,1859.0 866.8,1859.0C871.7,1859.0 876.5,1859.8 881.3,1859.8C886.2,1859.8 891.0,1859.8 895.9,1859.8C900.7,1859.8 905.5,1859.2 910.4,1859.0C915.2,1858.7 920.0,1858.5 924.9,1858.3C929.7,1858.2 934.6,1858.1 939.4,1858.1C944.2,1858.1 949.1,1858.4 953.9,1858.5C958.8,1858.6 963.6,1858.9 968.4,1858.9C973.3,1858.9 978.1,1858.0 983.0,1858.0C987.8,1858.0 992.6,1858.5 997.5,1858.7C1002.3,1858.8 1007.1,1859.0 1012.0,1859.0C1016.8,1859.0 1021.7,1858.7 1026.5,1858.7C1031.3,1858.7 1036.2,1859.5 1041.0,1859.5C1045.9,1859.5 1050.7,1859.2 1055.5,1859.1C1060.4,1859.1 1065.2,1859.1 1070.0,1859.1C1074.9,1859.1 1079.7,1859.3 1084.6,1859.3C1089.4,1859.3 1094.2,1859.2 1099.1,1859.2C1103.9,1859.1 1108.8,1859.0 1113.6,1858.8C1118.4,1858.7 1123.3,1858.3 1128.1,1858.3C1133.0,1858.3 1137.8,1859.2 1142.6,1859.2C1147.5,1859.2 1152.3,1858.1 1157.2,1858.1C1162.0,1858.1 1166.8,1858.1 1171.7,1858.1C1176.5,1858.1 1181.3,1858.7 1186.2,1858.7C1191.0,1858.7 1195.9,1858.5 1200.7,1858.5C1205.5,1858.5 1210.4,1859.5 1215.2,1859.5C1220.1,1859.5 1224.9,1858.3 1229.7,1858.3C1234.6,1858.3 1239.4,1858.7 1244.2,1858.9C1249.1,1859.1 1253.9,1859.4 1258.8,1859.4C1263.6,1859.4 1268.4,1858.8 1273.3,1858.8C1278.1,1858.8 1283.0,1859.6 1287.8,1859.6C1292.6,1859.6 1297.5,1858.2 1302.3,1858.2C1307.2,1858.2 1312.0,1858.3 1316.8,1858.3C1321.7,1858.4 1326.5,1858.5 1331.3,1858.6C1336.2,1858.6 1341.0,1858.6 1345.9,1858.7C1350.7,1858.8 1355.5,1859.1 1360.4,1859.1C1365.2,1859.1 1370.1,1858.4 1374.9,1858.4C1379.7,1858.4 1384.6,1859.0 1389.4,1859.1C1394.3,1859.3 1399.1,1859.4 1403.9,1859.4C1408.8,1859.4 1413.6,1859.3 1418.5,1859.3C1423.3,1859.3 1428.1,1859.6 1433.0,1859.6C1437.8,1859.6 1442.6,1858.2 1447.5,1858.2C1452.3,1858.2 1457.2,1858.8 1462.0,1859.4" fill="none" stroke="#1d4d45" stroke-width="2"/><path d="M591.0,1861.0C595.8,1861.0 600.7,1861.0 605.5,1861.0C610.4,1861.0 615.2,1861.0 620.0,1861.0C624.9,1861.0 629.7,1861.0 634.5,1861.0C639.4,1861.0 644.2,1861.0 649.1,1861.0C653.9,1861.0 658.7,1861.0 663.6,1861.0C668.4,1861.0 673.3,1861.0 678.1,1861.0C682.9,1861.0 687.8,1861.0 692.6,1861.0C697.5,1861.0 702.3,1861.0 707.1,1861.0C712.0,1861.0 716.8,1861.0 721.6,1861.0C726.5,1861.0 731.3,1861.0 736.2,1861.0C741.0,1861.0 745.8,1861.0 750.7,1861.0C755.5,1861.0 760.4,1861.0 765.2,1861.0C770.0,1861.0 774.9,1861.0 779.7,1861.0C784.6,1861.0 789.4,1861.0 794.2,1861.0C799.1,1861.0 803.9,1861.0 808.8,1861.0C813.6,1861.0 818.4,1861.0 823.3,1861.0C828.1,1861.0 832.9,1861.0 837.8,1861.0C842.6,1861.0 847.5,1861.0 852.3,1861.0C857.1,1861.0 862.0,1861.0 866.8,1861.0C871.7,1861.0 876.5,1861.0 881.3,1861.0C886.2,1861.0 891.0,1861.0 895.9,1861.0C900.7,1861.0 905.5,1861.0 910.4,1861.0C915.2,1861.0 920.0,1861.0 924.9,1861.0C929.7,1861.0 934.6,1861.0 939.4,1861.0C944.2,1861.0 949.1,1861.0 953.9,1861.0C958.8,1861.0 963.6,1861.0 968.4,1861.0C973.3,1861.0 978.1,1861.0 983.0,1861.0C987.8,1861.0 992.6,1861.0 997.5,1861.0C1002.3,1861.0 1007.1,1861.0 1012.0,1861.0C1016.8,1861.0 1021.7,1861.0 1026.5,1861.0C1031.3,1861.0 1036.2,1861.0 1041.0,1861.0C1045.9,1861.0 1050.7,1861.0 1055.5,1861.0C1060.4,1861.0 1065.2,1861.0 1070.0,1861.0C1074.9,1861.0 1079.7,1861.0 1084.6,1861.0C1089.4,1861.0 1094.2,1861.0 1099.1,1861.0C1103.9,1861.0 1108.8,1861.0 1113.6,1861.0C1118.4,1861.0 1123.3,1861.0 1128.1,1861.0C1133.0,1861.0 1137.8,1861.0 1142.6,1861.0C1147.5,1861.0 1152.3,1861.0 1157.2,1861.0C1162.0,1861.0 1166.8,1861.0 1171.7,1861.0C1176.5,1861.0 1181.3,1861.0 1186.2,1861.0C1191.0,1861.0 1195.9,1861.0 1200.7,1861.0C1205.5,1861.0 1210.4,1861.0 1215.2,1861.0C1220.1,1861.0 1224.9,1861.0 1229.7,1861.0C1234.6,1861.0 1239.4,1861.0 1244.2,1861.0C1249.1,1861.0 1253.9,1861.0 1258.8,1861.0C1263.6,1861.0 1268.4,1861.0 1273.3,1861.0C1278.1,1861.0 1283.0,1861.0 1287.8,1861.0C1292.6,1861.0 1297.5,1861.0 1302.3,1861.0C1307.2,1861.0 1312.0,1861.0 1316.8,1861.0C1321.7,1861.0 1326.5,1861.0 1331.3,1861.0C1336.2,1861.0 1341.0,1861.0 1345.9,1861.0C1350.7,1861.0 1355.5,1861.0 1360.4,1861.0C1365.2,1861.0 1370.1,1861.0 1374.9,1861.0C1379.7,1861.0 1384.6,1861.0 1389.4,1861.0C1394.3,1861.0 1399.1,1861.0 1403.9,1861.0C1408.8,1861.0 1413.6,1861.0 1418.5,1861.0C1423.3,1861.0 1428.1,1861.0 1433.0,1861.0C1437.8,1861.0 1442.6,1861.0 1447.5,1861.0C1452.3,1861.0 1457.2,1861.0 1462.0,1861.0" fill="none" stroke="#3f2e1a" stroke-width="2"/><path d="M591,1834 V1872 M583,1862 H1475 M983.5,1862 V1872 M1462,1862 V1872" stroke="#2e2f31" stroke-width="2" fill="none"/></svg>
<div class="t" style="right:3022.0px;top:1852.3px;font:400 23.1px/23.1px 'Liberation Mono', monospace;color:#2e2f30;letter-spacing:-0.66px;">0</div>
<div class="t" style="left:503.0px;top:1876.3px;font:400 23.1px/23.1px 'Liberation Mono', monospace;color:#2e2f30;letter-spacing:-0.66px;">Aug 4 3:04:00 PM</div>
<div class="t" style="left:-16.5px;width:2000px;text-align:center;top:1876.3px;font:400 23.1px/23.1px 'Liberation Mono', monospace;color:#2e2f30;letter-spacing:-0.66px;">3:31:00 PM</div>
<div class="t" style="right:2114.0px;top:1876.3px;font:400 23.1px/23.1px 'Liberation Mono', monospace;color:#2e2f30;letter-spacing:-0.66px;">4:04:00 PM</div>
<div style="position:absolute;left:462px;top:1900px;width:1200px;height:27px;overflow:hidden;">
<div class="t" style="left:88px;top:23.1px;font:400 22px/22px 'Liberation Mono', monospace;color:#1d5a48;">email</div>
<div class="t" style="left:203px;top:23.1px;font:400 22px/22px 'Liberation Mono', monospace;color:#4a3a7a;">fraud-detection</div>
<div class="t" style="left:446px;top:23.1px;font:400 22px/22px 'Liberation Mono', monospace;color:#6a5a3e;">load-generator</div>
<div class="t" style="left:656px;top:23.1px;font:400 22px/22px 'Liberation Mono', monospace;color:#1e3f7a;">checkout</div>
<div class="t" style="left:778px;top:23.1px;font:400 22px/22px 'Liberation Mono', monospace;color:#3a3b40;">+15 more</div>
</div>
<div class="b" style="left:342px;top:97px;width:2916px;height:1737px;background:#1b1c20;border-radius:5px 5px 0 0;"></div>
<svg class="s" style="left:392px;top:135px;" width="30" height="30" viewBox="0 0 30 30"><path d="M2.5,1 V27.5 H29" fill="none" stroke="#f1f1f3" stroke-width="2.6"/><path d="M7,21 L14,12 L19,17 L27,8" fill="none" stroke="#f1f1f3" stroke-width="2.4"/></svg>
<div class="t" style="left:440.0px;top:139.3px;font:400 27.72px/27.72px 'Liberation Mono', monospace;color:#f1f1f3;letter-spacing:-0.79px;">Line/Bar</div>
<svg class="s" style="left:627px;top:135px;" width="30" height="30" viewBox="0 0 30 30"><rect x="1.5" y="1.5" width="27" height="27" rx="4" fill="none" stroke="#f1f1f3" stroke-width="2.6"/><rect x="1.5" y="1.5" width="27" height="6" rx="2" fill="#f1f1f3"/><line x1="1.5" y1="14.5" x2="28.5" y2="14.5" stroke="#f1f1f3" stroke-width="2.4"/><line x1="1.5" y1="21.5" x2="28.5" y2="21.5" stroke="#f1f1f3" stroke-width="2.4"/><line x1="10.5" y1="4" x2="10.5" y2="28" stroke="#f1f1f3" stroke-width="2.4"/><line x1="19.5" y1="4" x2="19.5" y2="28" stroke="#f1f1f3" stroke-width="2.4"/></svg>
<div class="t" style="left:675.0px;top:139.3px;font:400 27.72px/27.72px 'Liberation Mono', monospace;color:#f1f1f3;letter-spacing:-0.79px;">Table</div>
<div class="t" style="left:816.0px;top:141.6px;font:400 17px/17px 'Liberation Sans', sans-serif;color:#f1f1f3;">123</div>
<div class="t" style="left:863.0px;top:139.3px;font:400 27.72px/27.72px 'Liberation Mono', monospace;color:#f1f1f3;letter-spacing:-0.79px;">Number</div>
<svg class="s" style="left:1020px;top:140px;" width="27" height="21" viewBox="0 0 27 21"><rect x="1" y="1" width="25" height="19" rx="2.5" fill="none" stroke="#f1f1f3" stroke-width="2"/><circle cx="6" cy="6" r="1.1" fill="#f1f1f3"/><circle cx="6" cy="10.5" r="1.1" fill="#f1f1f3"/><circle cx="6" cy="15" r="1.1" fill="#f1f1f3"/><line x1="9.5" y1="6" x2="21.5" y2="6" stroke="#f1f1f3" stroke-width="1.9"/><line x1="9.5" y1="10.5" x2="21.5" y2="10.5" stroke="#f1f1f3" stroke-width="1.9"/><line x1="9.5" y1="15" x2="21.5" y2="15" stroke="#f1f1f3" stroke-width="1.9"/></svg>
<div class="t" style="left:1067.0px;top:139.3px;font:400 27.72px/27.72px 'Liberation Mono', monospace;color:#f1f1f3;letter-spacing:-0.79px;">Search</div>
<svg class="s" style="left:1224px;top:140px;" width="27" height="21" viewBox="0 0 27 21"><rect x="1" y="1" width="25" height="19" rx="2.5" fill="none" stroke="#f1f1f3" stroke-width="2"/><path d="M5,15 V6 L9,11 L13,6 V15" fill="none" stroke="#f1f1f3" stroke-width="1.9"/><path d="M18.5,5.5 V15 M15.5,12 L18.5,15 L21.5,12" fill="none" stroke="#f1f1f3" stroke-width="1.9"/></svg>
<div class="t" style="left:1270.0px;top:139.3px;font:400 27.72px/27.72px 'Liberation Mono', monospace;color:#f1f1f3;letter-spacing:-0.79px;">Markdown</div>
<div class="b" style="left:362px;top:183px;width:2876px;height:4px;background:#37383d;"></div>
<div class="b" style="left:362px;top:183px;width:235px;height:4px;background:#12b886;"></div>
<div class="t" style="left:363.0px;top:243.1px;font:400 27.3px/27.3px 'Liberation Mono', monospace;color:#b9bac0;letter-spacing:-0.78px;">Chart Name</div>
<div class="b" style="left:542px;top:219px;width:2696px;height:72px;background:#25262b;border:2px solid #6b6c76;border-radius:5px;"></div>
<div class="t" style="left:568.0px;top:244.1px;font:400 27.3px/27.3px 'Liberation Mono', monospace;color:#cfd0d4;letter-spacing:-0.78px;">Average duration by service</div>
<div class="b" style="left:988px;top:238px;width:2px;height:35px;background:#d8d8dc;"></div>
<div class="b" style="left:362px;top:323px;width:2876px;height:2px;background:#2e3035;"></div>
<div class="t" style="left:363.0px;top:376.1px;font:400 27.3px/27.3px 'Liberation Mono', monospace;color:#b9bac0;letter-spacing:-0.78px;">Data Source</div>
<div class="b" style="left:590px;top:357px;width:414px;height:60px;background:#25262b;border:2px solid #6b6c76;border-radius:5px;"></div>
<svg class="s" style="left:603px;top:372px;" width="32" height="28" viewBox="0 0 32 28"><rect x="2" y="9" width="27" height="17" rx="3" fill="none" stroke="#c0c1c6" stroke-width="2.2"/><line x1="6" y1="5.5" x2="25" y2="5.5" stroke="#c0c1c6" stroke-width="2"/><line x1="9" y1="2" x2="22" y2="2" stroke="#c0c1c6" stroke-width="2"/></svg>
<div class="t" style="left:648.0px;top:375.9px;font:400 26.25px/26.25px 'Liberation Mono', monospace;color:#d3d4d8;letter-spacing:-0.75px;">Traces</div>
<svg class="s" style="left:968px;top:377px;" width="14" height="20" viewBox="0 0 14 20"><path d="M2,6.5 L7,1.5 L12,6.5 M2,13.5 L7,18.5 L12,13.5" fill="none" stroke="#8b8c92" stroke-width="1.8"/></svg>
<div class="b" style="left:362px;top:478px;width:2470px;height:2px;background:#2e3035;"></div>
<div class="t" style="left:2853.0px;top:469.3px;font:400 23.1px/23.1px 'Liberation Mono', monospace;color:#9c9fa4;letter-spacing:-0.66px;">Alias</div>
<div class="b" style="left:2938px;top:450px;width:300px;height:58px;background:#25262b;border:2px solid #6b6c76;border-radius:5px;"></div>
<div class="t" style="left:2961.0px;top:468.7px;font:400 25.200000000000003px/25.200000000000003px 'Liberation Mono', monospace;color:#cfd0d4;letter-spacing:-0.72px;">Average Time</div>
<div class="b" style="left:362px;top:529px;width:426px;height:71px;background:#25262b;border:2px solid #6b6c76;border-radius:5px;"></div>
<div class="t" style="left:389.0px;top:552.1px;font:400 27.3px/27.3px 'Liberation Mono', monospace;color:#d3d4d8;letter-spacing:-0.78px;">Average</div>
<svg class="s" style="left:746px;top:555px;" width="14" height="20" viewBox="0 0 14 20"><path d="M2,6.5 L7,1.5 L12,6.5 M2,13.5 L7,18.5 L12,13.5" fill="none" stroke="#8b8c92" stroke-width="1.8"/></svg>
<div class="b" style="left:813px;top:529px;width:440px;height:71px;background:#25262b;border:2px solid #6b6c76;border-radius:5px;"></div>
<div class="t" style="left:836.0px;top:551.5px;font:400 29.400000000000002px/29.400000000000002px 'Liberation Mono', monospace;color:#e06c75;letter-spacing:-0.84px;"><span style="color:#e06c75">Duration</span><span style="color:#56b6c2">/</span><span style="color:#e5c07b">1000</span></div>
<div class="t" style="left:1277.0px;top:553.1px;font:400 27.3px/27.3px 'Liberation Mono', monospace;color:#f1f1f3;letter-spacing:-0.78px;">Where</div>
<div class="b" style="left:1380px;top:529px;width:1083px;height:71px;background:#25262b;border:2px solid #6b6c76;border-radius:5px;"></div>
<div class="t" style="left:1406.0px;top:553.1px;font:400 27.3px/27.3px 'Liberation Mono', monospace;color:#6c6e74;letter-spacing:-0.78px;">Search your events w/ Lucene ex. column:foo</div>
<div class="t" style="left:2272.0px;top:553.7px;font:400 25.200000000000003px/25.200000000000003px 'Liberation Mono', monospace;color:#cfd0d4;letter-spacing:-0.72px;">SQL</div>
<div class="t" style="left:2331.0px;top:553.7px;font:400 25.200000000000003px/25.200000000000003px 'Liberation Mono', monospace;color:#77797f;letter-spacing:-0.72px;">|</div>
<div class="t" style="left:2354.0px;top:553.7px;font:400 25.200000000000003px/25.200000000000003px 'Liberation Mono', monospace;color:#20c997;letter-spacing:-0.72px;">Lucene</div>
<div class="t" style="left:2490.0px;top:552.1px;font:400 27.3px/27.3px 'Liberation Mono', monospace;color:#f1f1f3;letter-spacing:-0.78px;">Group By</div>
<div class="b" style="left:2638px;top:530px;width:600px;height:70px;background:#25262b;border:2px solid #6b6c76;border-radius:5px;"></div>
<div class="t" style="left:2661.0px;top:551.5px;font:400 29.400000000000002px/29.400000000000002px 'Liberation Mono', monospace;color:#e06c75;letter-spacing:-0.84px;">ServiceName</div>
<div class="b" style="left:362px;top:633px;width:2876px;height:2px;background:#2e3035;"></div>
<svg class="s" style="left:398px;top:680px;" width="30" height="30" viewBox="0 0 30 30"><circle cx="15" cy="15" r="12.5" fill="none" stroke="#b6b7be" stroke-width="2"/><path d="M15,8.5 V21.5 M8.5,15 H21.5" stroke="#b6b7be" stroke-width="2"/></svg>
<div class="t" style="left:442.0px;top:684.1px;font:700 27.3px/27.3px 'Liberation Mono', monospace;color:#b6b7be;letter-spacing:-0.78px;">Add Series</div>
<div class="b" style="left:2937px;top:669px;width:301px;height:52px;background:#25262b;border:2px solid #37383d;border-radius:5px;"></div>
<div class="t" style="left:2955.0px;top:684.1px;font:700 27.3px/27.3px 'Liberation Mono', monospace;color:#f1f1f3;letter-spacing:-0.78px;">Set number format</div>
<div class="b" style="left:362px;top:756px;width:138px;height:70px;border:2.5px solid #13d39b;border-radius:5px;"></div>
<div class="t" style="left:400.0px;top:778.1px;font:700 27.3px/27.3px 'Liberation Mono', monospace;color:#19d49c;letter-spacing:-0.78px;">Save</div>
<div class="t" style="left:563.0px;top:780.1px;font:700 27.3px/27.3px 'Liberation Mono', monospace;color:#9d9ea4;letter-spacing:-0.78px;">Cancel</div>
<div class="b" style="left:2728px;top:780px;width:383px;height:74px;border:2px solid #25262b;border-radius:9px;"></div>
<div class="t" style="left:2750.0px;top:804.5px;font:400 29.400000000000002px/29.400000000000002px 'Liberation Mono', monospace;color:#dadbde;letter-spacing:-0.84px;">Auto Granularity</div>
<svg class="s" style="left:3060px;top:808px;" width="28" height="20" viewBox="0 0 28 20"><path d="M3,4 L13.5,14 L24,4" fill="none" stroke="#d4d4d6" stroke-width="4"/></svg>
<div class="b" style="left:3136px;top:781px;width:102px;height:71px;border:3px solid #13d39b;border-radius:5px;"></div>
<svg class="s" style="left:3178px;top:808px;" width="18" height="18" viewBox="0 0 18 18"><path d="M2,2 L15,9 L2,16 Z" fill="none" stroke="#13d39b" stroke-width="2.2" stroke-linejoin="round"/></svg>
<svg class="s" style="left:0;top:0" width="3600" height="1930" viewBox="0 0 3600 1930"><defs><clipPath id="cc"><rect x="452" y="884" width="2760" height="692"/></clipPath></defs><g clip-path="url(#cc)"><path d="M452.0,1562.9C467.2,1562.9 482.4,1563.0 497.6,1563.1C512.8,1563.3 528.0,1564.0 543.2,1564.0C558.4,1564.0 573.6,1562.9 588.9,1562.9C604.1,1562.9 619.3,1563.0 634.5,1563.0C649.7,1563.1 664.9,1563.2 680.1,1563.2C695.3,1563.2 710.5,1562.2 725.7,1562.2C740.9,1562.2 756.1,1562.9 771.3,1563.0C786.5,1563.2 801.7,1563.2 816.9,1563.3C832.1,1563.4 847.3,1563.7 862.5,1563.7C877.8,1563.7 893.0,1562.0 908.2,1562.0C923.4,1562.0 938.6,1562.5 953.8,1562.5C969.0,1562.5 984.2,1562.0 999.4,1562.0C1014.6,1562.0 1029.8,1563.7 1045.0,1563.7C1060.2,1563.7 1075.4,1563.7 1090.6,1563.5C1105.8,1563.3 1121.0,1561.9 1136.2,1561.9C1151.5,1561.9 1166.7,1564.2 1181.9,1564.2C1197.1,1564.2 1212.3,1564.1 1227.5,1564.1C1242.7,1564.1 1257.9,1563.4 1273.1,1563.4C1288.3,1563.3 1303.5,1563.3 1318.7,1563.3C1333.9,1563.2 1349.1,1562.4 1364.3,1562.2C1379.5,1561.9 1394.7,1561.8 1410.0,1561.8C1425.2,1561.8 1440.4,1563.1 1455.6,1563.1C1470.8,1563.1 1486.0,1561.9 1501.2,1561.9C1516.4,1561.9 1531.6,1562.2 1546.8,1562.3C1562.0,1562.3 1577.2,1562.4 1592.4,1562.4C1607.6,1562.4 1622.8,1561.9 1638.0,1561.9C1653.2,1561.9 1668.4,1562.9 1683.7,1562.9C1698.9,1562.9 1714.1,1562.9 1729.3,1562.9C1744.5,1562.9 1759.7,1563.8 1774.9,1563.8C1790.1,1563.8 1805.3,1563.0 1820.5,1563.0C1835.7,1563.0 1850.9,1563.3 1866.1,1563.3C1881.3,1563.3 1896.5,1563.0 1911.7,1563.0C1926.9,1563.0 1942.1,1563.4 1957.3,1563.4C1972.6,1563.4 1987.8,1563.1 2003.0,1562.9C2018.2,1562.7 2033.4,1562.5 2048.6,1562.5C2063.8,1562.5 2079.0,1564.2 2094.2,1564.2C2109.4,1564.2 2124.6,1564.2 2139.8,1564.2C2155.0,1564.2 2170.2,1563.9 2185.4,1563.8C2200.6,1563.7 2215.8,1563.7 2231.1,1563.5C2246.3,1563.3 2261.5,1562.7 2276.7,1562.6C2291.9,1562.4 2307.1,1562.4 2322.3,1562.4C2337.5,1562.4 2352.7,1562.5 2367.9,1562.5C2383.1,1562.5 2398.3,1562.0 2413.5,1562.0C2428.7,1562.0 2443.9,1563.6 2459.1,1563.6C2474.3,1563.6 2489.5,1562.8 2504.8,1562.8C2520.0,1562.8 2535.2,1563.8 2550.4,1563.8C2565.6,1563.8 2580.8,1562.7 2596.0,1562.7C2611.2,1562.7 2626.4,1564.1 2641.6,1564.1C2656.8,1564.1 2672.0,1564.0 2687.2,1563.8C2702.4,1563.7 2717.6,1561.8 2732.8,1561.8C2748.0,1561.8 2763.2,1562.0 2778.4,1562.3C2793.7,1562.6 2808.9,1564.0 2824.1,1564.0C2839.3,1564.0 2854.5,1562.9 2869.7,1562.9C2884.9,1562.9 2900.1,1564.2 2915.3,1564.2C2930.5,1564.2 2945.7,1563.1 2960.9,1562.8C2976.1,1562.4 2991.3,1562.0 3006.5,1562.0C3021.7,1562.0 3036.9,1563.1 3052.2,1563.3C3067.4,1563.5 3082.6,1563.7 3097.8,1563.7C3113.0,1563.7 3128.2,1562.7 3143.4,1562.4C3158.6,1562.2 3173.8,1562.1 3189.0,1562.0" fill="none" stroke="#f08f7a" stroke-width="2.0"/><path d="M452.0,1564.9C467.2,1565.1 482.4,1565.3 497.6,1565.3C512.8,1565.3 528.0,1565.3 543.2,1565.3C558.4,1565.3 573.6,1564.5 588.9,1564.3C604.1,1564.1 619.3,1564.0 634.5,1564.0C649.7,1564.0 664.9,1564.7 680.1,1564.7C695.3,1564.7 710.5,1564.5 725.7,1564.5C740.9,1564.5 756.1,1565.6 771.3,1565.6C786.5,1565.6 801.7,1565.5 816.9,1565.4C832.1,1565.3 847.3,1565.2 862.5,1565.2C877.8,1565.2 893.0,1565.1 908.2,1565.1C923.4,1565.1 938.6,1565.3 953.8,1565.3C969.0,1565.3 984.2,1564.3 999.4,1564.3C1014.6,1564.3 1029.8,1564.9 1045.0,1564.9C1060.2,1564.9 1075.4,1564.3 1090.6,1564.3C1105.8,1564.3 1121.0,1565.8 1136.2,1565.8C1151.5,1565.8 1166.7,1564.1 1181.9,1564.1C1197.1,1564.1 1212.3,1565.6 1227.5,1565.6C1242.7,1565.6 1257.9,1564.1 1273.1,1564.1C1288.3,1564.1 1303.5,1565.4 1318.7,1565.4C1333.9,1565.4 1349.1,1564.7 1364.3,1564.7C1379.5,1564.7 1394.7,1564.7 1410.0,1564.8C1425.2,1564.9 1440.4,1565.7 1455.6,1565.7C1470.8,1565.7 1486.0,1564.0 1501.2,1564.0C1516.4,1564.0 1531.6,1564.1 1546.8,1564.1C1562.0,1564.2 1577.2,1565.8 1592.4,1565.8C1607.6,1565.8 1622.8,1565.3 1638.0,1565.0C1653.2,1564.7 1668.4,1564.2 1683.7,1564.2C1698.9,1564.2 1714.1,1566.0 1729.3,1566.0C1744.5,1566.0 1759.7,1565.9 1774.9,1565.9C1790.1,1565.8 1805.3,1564.2 1820.5,1564.2C1835.7,1564.2 1850.9,1564.8 1866.1,1564.8C1881.3,1564.8 1896.5,1564.3 1911.7,1564.3C1926.9,1564.3 1942.1,1564.5 1957.3,1564.6C1972.6,1564.8 1987.8,1565.2 2003.0,1565.2C2018.2,1565.2 2033.4,1564.3 2048.6,1564.3C2063.8,1564.3 2079.0,1565.4 2094.2,1565.4C2109.4,1565.4 2124.6,1564.1 2139.8,1564.1C2155.0,1564.1 2170.2,1564.2 2185.4,1564.3C2200.6,1564.5 2215.8,1565.6 2231.1,1565.6C2246.3,1565.6 2261.5,1564.8 2276.7,1564.8C2291.9,1564.8 2307.1,1564.8 2322.3,1564.8C2337.5,1564.9 2352.7,1565.2 2367.9,1565.2C2383.1,1565.2 2398.3,1565.0 2413.5,1565.0C2428.7,1564.9 2443.9,1564.9 2459.1,1564.8C2474.3,1564.6 2489.5,1564.1 2504.8,1564.1C2520.0,1564.1 2535.2,1565.1 2550.4,1565.5C2565.6,1565.8 2580.8,1565.9 2596.0,1565.9C2611.2,1565.9 2626.4,1566.0 2641.6,1566.0C2656.8,1566.0 2672.0,1565.5 2687.2,1565.3C2702.4,1565.1 2717.6,1564.7 2732.8,1564.7C2748.0,1564.7 2763.2,1564.7 2778.4,1564.7C2793.7,1564.7 2808.9,1565.4 2824.1,1565.4C2839.3,1565.4 2854.5,1565.4 2869.7,1565.3C2884.9,1565.3 2900.1,1564.2 2915.3,1564.2C2930.5,1564.2 2945.7,1564.4 2960.9,1564.5C2976.1,1564.6 2991.3,1564.6 3006.5,1564.7C3021.7,1564.8 3036.9,1564.9 3052.2,1565.0C3067.4,1565.2 3082.6,1565.6 3097.8,1565.6C3113.0,1565.6 3128.2,1565.3 3143.4,1565.0C3158.6,1564.7 3173.8,1564.4 3189.0,1564.1" fill="none" stroke="#20b6a0" stroke-width="2.0"/><path d="M452.0,1566.5C467.2,1566.9 482.4,1567.4 497.6,1567.4C512.8,1567.4 528.0,1567.4 543.2,1567.4C558.4,1567.4 573.6,1567.7 588.9,1567.7C604.1,1567.7 619.3,1566.4 634.5,1566.4C649.7,1566.4 664.9,1566.5 680.1,1566.5C695.3,1566.5 710.5,1566.3 725.7,1566.3C740.9,1566.3 756.1,1566.3 771.3,1566.5C786.5,1566.6 801.7,1567.5 816.9,1567.5C832.1,1567.5 847.3,1566.3 862.5,1566.3C877.8,1566.3 893.0,1567.1 908.2,1567.1C923.4,1567.1 938.6,1566.4 953.8,1566.4C969.0,1566.4 984.2,1566.5 999.4,1566.6C1014.6,1566.7 1029.8,1566.7 1045.0,1566.9C1060.2,1567.0 1075.4,1567.7 1090.6,1567.7C1105.8,1567.7 1121.0,1567.5 1136.2,1567.2C1151.5,1566.9 1166.7,1566.0 1181.9,1566.0C1197.1,1566.0 1212.3,1566.6 1227.5,1566.6C1242.7,1566.6 1257.9,1566.3 1273.1,1566.3C1288.3,1566.3 1303.5,1567.7 1318.7,1567.7C1333.9,1567.7 1349.1,1567.6 1364.3,1567.6C1379.5,1567.6 1394.7,1567.6 1410.0,1567.6C1425.2,1567.6 1440.4,1567.7 1455.6,1567.7C1470.8,1567.7 1486.0,1567.5 1501.2,1567.5C1516.4,1567.5 1531.6,1567.9 1546.8,1567.9C1562.0,1567.9 1577.2,1567.8 1592.4,1567.6C1607.6,1567.4 1622.8,1566.5 1638.0,1566.5C1653.2,1566.5 1668.4,1567.7 1683.7,1567.7C1698.9,1567.7 1714.1,1567.0 1729.3,1567.0C1744.5,1567.0 1759.7,1567.5 1774.9,1567.5C1790.1,1567.5 1805.3,1567.2 1820.5,1567.1C1835.7,1567.0 1850.9,1566.9 1866.1,1566.9C1881.3,1566.8 1896.5,1566.7 1911.7,1566.7C1926.9,1566.7 1942.1,1566.9 1957.3,1566.9C1972.6,1566.9 1987.8,1566.7 2003.0,1566.6C2018.2,1566.5 2033.4,1566.2 2048.6,1566.2C2063.8,1566.2 2079.0,1567.6 2094.2,1567.6C2109.4,1567.6 2124.6,1567.6 2139.8,1567.6C2155.0,1567.6 2170.2,1568.0 2185.4,1568.0C2200.6,1568.0 2215.8,1567.5 2231.1,1567.4C2246.3,1567.2 2261.5,1567.1 2276.7,1567.1C2291.9,1567.1 2307.1,1567.5 2322.3,1567.5C2337.5,1567.5 2352.7,1566.3 2367.9,1566.3C2383.1,1566.3 2398.3,1567.4 2413.5,1567.4C2428.7,1567.4 2443.9,1567.1 2459.1,1566.9C2474.3,1566.7 2489.5,1566.4 2504.8,1566.4C2520.0,1566.4 2535.2,1566.4 2550.4,1566.4C2565.6,1566.4 2580.8,1567.0 2596.0,1567.0C2611.2,1567.0 2626.4,1566.5 2641.6,1566.5C2656.8,1566.5 2672.0,1566.8 2687.2,1566.9C2702.4,1567.0 2717.6,1567.2 2732.8,1567.2C2748.0,1567.2 2763.2,1566.9 2778.4,1566.8C2793.7,1566.6 2808.9,1566.3 2824.1,1566.3C2839.3,1566.3 2854.5,1567.0 2869.7,1567.0C2884.9,1567.0 2900.1,1566.5 2915.3,1566.5C2930.5,1566.5 2945.7,1566.5 2960.9,1566.5C2976.1,1566.5 2991.3,1566.4 3006.5,1566.4C3021.7,1566.4 3036.9,1566.7 3052.2,1566.7C3067.4,1566.7 3082.6,1566.1 3097.8,1566.1C3113.0,1566.1 3128.2,1567.0 3143.4,1567.3C3158.6,1567.6 3173.8,1567.8 3189.0,1567.9" fill="none" stroke="#f5b92e" stroke-width="2.4"/><path d="M452.0,1568.4C467.2,1568.8 482.4,1569.3 497.6,1569.3C512.8,1569.3 528.0,1569.2 543.2,1569.2C558.4,1569.2 573.6,1569.7 588.9,1569.7C604.1,1569.7 619.3,1568.7 634.5,1568.6C649.7,1568.6 664.9,1568.6 680.1,1568.6C695.3,1568.6 710.5,1569.4 725.7,1569.4C740.9,1569.4 756.1,1569.3 771.3,1569.3C786.5,1569.2 801.7,1568.7 816.9,1568.7C832.1,1568.7 847.3,1569.3 862.5,1569.3C877.8,1569.3 893.0,1568.8 908.2,1568.8C923.4,1568.8 938.6,1569.4 953.8,1569.4C969.0,1569.4 984.2,1568.4 999.4,1568.4C1014.6,1568.4 1029.8,1568.4 1045.0,1568.6C1060.2,1568.7 1075.4,1569.6 1090.6,1569.6C1105.8,1569.6 1121.0,1568.9 1136.2,1568.8C1151.5,1568.7 1166.7,1568.6 1181.9,1568.6C1197.1,1568.6 1212.3,1569.5 1227.5,1569.5C1242.7,1569.5 1257.9,1569.4 1273.1,1569.2C1288.3,1569.0 1303.5,1568.4 1318.7,1568.4C1333.9,1568.4 1349.1,1569.0 1364.3,1569.1C1379.5,1569.2 1394.7,1569.3 1410.0,1569.3C1425.2,1569.3 1440.4,1568.5 1455.6,1568.5C1470.8,1568.5 1486.0,1569.2 1501.2,1569.2C1516.4,1569.2 1531.6,1568.4 1546.8,1568.4C1562.0,1568.4 1577.2,1568.7 1592.4,1568.7C1607.6,1568.7 1622.8,1568.3 1638.0,1568.3C1653.2,1568.3 1668.4,1568.4 1683.7,1568.5C1698.9,1568.7 1714.1,1569.8 1729.3,1569.8C1744.5,1569.8 1759.7,1568.8 1774.9,1568.8C1790.1,1568.8 1805.3,1569.8 1820.5,1569.8C1835.7,1569.8 1850.9,1568.9 1866.1,1568.9C1881.3,1568.9 1896.5,1569.1 1911.7,1569.2C1926.9,1569.3 1942.1,1569.6 1957.3,1569.6C1972.6,1569.6 1987.8,1569.5 2003.0,1569.3C2018.2,1569.1 2033.4,1568.4 2048.6,1568.4C2063.8,1568.4 2079.0,1569.1 2094.2,1569.1C2109.4,1569.2 2124.6,1569.2 2139.8,1569.2C2155.0,1569.2 2170.2,1568.6 2185.4,1568.5C2200.6,1568.4 2215.8,1568.4 2231.1,1568.4C2246.3,1568.4 2261.5,1569.6 2276.7,1569.6C2291.9,1569.6 2307.1,1569.2 2322.3,1569.0C2337.5,1568.8 2352.7,1568.5 2367.9,1568.5C2383.1,1568.5 2398.3,1568.9 2413.5,1568.9C2428.7,1568.9 2443.9,1568.5 2459.1,1568.5C2474.3,1568.5 2489.5,1569.5 2504.8,1569.5C2520.0,1569.5 2535.2,1569.2 2550.4,1569.0C2565.6,1568.8 2580.8,1568.4 2596.0,1568.4C2611.2,1568.4 2626.4,1569.5 2641.6,1569.5C2656.8,1569.5 2672.0,1568.3 2687.2,1568.3C2702.4,1568.3 2717.6,1568.6 2732.8,1568.6C2748.0,1568.6 2763.2,1568.2 2778.4,1568.2C2793.7,1568.2 2808.9,1569.4 2824.1,1569.4C2839.3,1569.4 2854.5,1568.4 2869.7,1568.4C2884.9,1568.4 2900.1,1569.0 2915.3,1569.0C2930.5,1569.0 2945.7,1568.3 2960.9,1568.3C2976.1,1568.3 2991.3,1568.8 3006.5,1569.0C3021.7,1569.1 3036.9,1569.3 3052.2,1569.3C3067.4,1569.3 3082.6,1569.1 3097.8,1569.1C3113.0,1569.0 3128.2,1568.9 3143.4,1568.9C3158.6,1568.9 3173.8,1569.0 3189.0,1569.0" fill="none" stroke="#f08c2c" stroke-width="2.2"/><path d="M452.0,1571.6C467.2,1571.0 482.4,1570.4 497.6,1570.4C512.8,1570.4 528.0,1571.3 543.2,1571.3C558.4,1571.3 573.6,1570.6 588.9,1570.6C604.1,1570.6 619.3,1571.6 634.5,1571.6C649.7,1571.6 664.9,1570.4 680.1,1570.4C695.3,1570.4 710.5,1571.5 725.7,1571.5C740.9,1571.5 756.1,1571.2 771.3,1571.2C786.5,1571.2 801.7,1571.4 816.9,1571.4C832.1,1571.5 847.3,1571.6 862.5,1571.6C877.8,1571.6 893.0,1570.7 908.2,1570.7C923.4,1570.7 938.6,1570.7 953.8,1570.8C969.0,1570.9 984.2,1571.2 999.4,1571.2C1014.6,1571.2 1029.8,1570.8 1045.0,1570.7C1060.2,1570.7 1075.4,1570.7 1090.6,1570.7C1105.8,1570.7 1121.0,1570.7 1136.2,1570.7C1151.5,1570.7 1166.7,1571.4 1181.9,1571.4C1197.1,1571.4 1212.3,1571.4 1227.5,1571.4C1242.7,1571.4 1257.9,1571.4 1273.1,1571.4C1288.3,1571.3 1303.5,1570.7 1318.7,1570.7C1333.9,1570.7 1349.1,1571.5 1364.3,1571.5C1379.5,1571.5 1394.7,1571.2 1410.0,1571.0C1425.2,1570.9 1440.4,1570.7 1455.6,1570.7C1470.8,1570.7 1486.0,1570.9 1501.2,1570.9C1516.4,1570.9 1531.6,1570.9 1546.8,1570.9C1562.0,1570.9 1577.2,1570.5 1592.4,1570.5C1607.6,1570.5 1622.8,1571.1 1638.0,1571.1C1653.2,1571.1 1668.4,1570.8 1683.7,1570.8C1698.9,1570.8 1714.1,1571.0 1729.3,1571.1C1744.5,1571.2 1759.7,1571.5 1774.9,1571.5C1790.1,1571.5 1805.3,1571.3 1820.5,1571.2C1835.7,1571.1 1850.9,1570.9 1866.1,1570.9C1881.3,1570.9 1896.5,1571.3 1911.7,1571.4C1926.9,1571.5 1942.1,1571.6 1957.3,1571.6C1972.6,1571.6 1987.8,1571.0 2003.0,1571.0C2018.2,1571.0 2033.4,1571.5 2048.6,1571.5C2063.8,1571.5 2079.0,1570.4 2094.2,1570.4C2109.4,1570.4 2124.6,1570.5 2139.8,1570.6C2155.0,1570.6 2170.2,1570.6 2185.4,1570.6C2200.6,1570.6 2215.8,1571.5 2231.1,1571.5C2246.3,1571.5 2261.5,1571.2 2276.7,1571.2C2291.9,1571.2 2307.1,1571.3 2322.3,1571.3C2337.5,1571.3 2352.7,1570.7 2367.9,1570.7C2383.1,1570.7 2398.3,1570.9 2413.5,1571.0C2428.7,1571.1 2443.9,1571.5 2459.1,1571.5C2474.3,1571.5 2489.5,1570.5 2504.8,1570.5C2520.0,1570.5 2535.2,1570.5 2550.4,1570.5C2565.6,1570.5 2580.8,1570.5 2596.0,1570.5C2611.2,1570.5 2626.4,1570.8 2641.6,1571.0C2656.8,1571.1 2672.0,1571.4 2687.2,1571.4C2702.4,1571.4 2717.6,1571.2 2732.8,1571.1C2748.0,1571.0 2763.2,1570.9 2778.4,1570.9C2793.7,1570.9 2808.9,1571.0 2824.1,1571.0C2839.3,1571.0 2854.5,1570.6 2869.7,1570.6C2884.9,1570.6 2900.1,1571.5 2915.3,1571.5C2930.5,1571.5 2945.7,1570.9 2960.9,1570.8C2976.1,1570.7 2991.3,1570.7 3006.5,1570.7C3021.7,1570.7 3036.9,1570.7 3052.2,1570.8C3067.4,1570.8 3082.6,1571.4 3097.8,1571.4C3113.0,1571.4 3128.2,1570.8 3143.4,1570.8C3158.6,1570.8 3173.8,1571.1 3189.0,1571.5" fill="none" stroke="#2f6cf0" stroke-width="2.4"/><path d="M452.0,1573.4C467.2,1573.5 482.4,1573.5 497.6,1573.5C512.8,1573.5 528.0,1573.5 543.2,1573.5C558.4,1573.5 573.6,1573.5 588.9,1573.5C604.1,1573.5 619.3,1573.4 634.5,1573.4C649.7,1573.4 664.9,1573.6 680.1,1573.6C695.3,1573.6 710.5,1573.4 725.7,1573.4C740.9,1573.4 756.1,1573.6 771.3,1573.6C786.5,1573.6 801.7,1573.2 816.9,1573.2C832.1,1573.2 847.3,1573.4 862.5,1573.4C877.8,1573.4 893.0,1573.4 908.2,1573.4C923.4,1573.4 938.6,1573.3 953.8,1573.3C969.0,1573.3 984.2,1573.6 999.4,1573.6C1014.6,1573.6 1029.8,1573.4 1045.0,1573.4C1060.2,1573.4 1075.4,1573.6 1090.6,1573.7C1105.8,1573.7 1121.0,1573.8 1136.2,1573.8C1151.5,1573.8 1166.7,1573.4 1181.9,1573.4C1197.1,1573.4 1212.3,1573.7 1227.5,1573.7C1242.7,1573.7 1257.9,1573.7 1273.1,1573.7C1288.3,1573.7 1303.5,1573.7 1318.7,1573.6C1333.9,1573.5 1349.1,1573.2 1364.3,1573.2C1379.5,1573.2 1394.7,1573.4 1410.0,1573.5C1425.2,1573.5 1440.4,1573.6 1455.6,1573.6C1470.8,1573.6 1486.0,1573.4 1501.2,1573.4C1516.4,1573.3 1531.6,1573.3 1546.8,1573.3C1562.0,1573.3 1577.2,1573.4 1592.4,1573.4C1607.6,1573.4 1622.8,1573.4 1638.0,1573.4C1653.2,1573.4 1668.4,1573.7 1683.7,1573.7C1698.9,1573.7 1714.1,1573.4 1729.3,1573.4C1744.5,1573.4 1759.7,1573.4 1774.9,1573.5C1790.1,1573.5 1805.3,1573.5 1820.5,1573.6C1835.7,1573.6 1850.9,1573.8 1866.1,1573.8C1881.3,1573.8 1896.5,1573.5 1911.7,1573.4C1926.9,1573.3 1942.1,1573.2 1957.3,1573.2C1972.6,1573.2 1987.8,1573.8 2003.0,1573.8C2018.2,1573.8 2033.4,1573.7 2048.6,1573.7C2063.8,1573.7 2079.0,1573.7 2094.2,1573.7C2109.4,1573.7 2124.6,1573.6 2139.8,1573.5C2155.0,1573.5 2170.2,1573.4 2185.4,1573.3C2200.6,1573.3 2215.8,1573.3 2231.1,1573.3C2246.3,1573.3 2261.5,1573.4 2276.7,1573.4C2291.9,1573.4 2307.1,1573.5 2322.3,1573.5C2337.5,1573.5 2352.7,1573.2 2367.9,1573.2C2383.1,1573.2 2398.3,1573.6 2413.5,1573.6C2428.7,1573.6 2443.9,1573.6 2459.1,1573.6C2474.3,1573.6 2489.5,1573.2 2504.8,1573.2C2520.0,1573.2 2535.2,1573.7 2550.4,1573.7C2565.6,1573.7 2580.8,1573.5 2596.0,1573.5C2611.2,1573.5 2626.4,1573.8 2641.6,1573.8C2656.8,1573.8 2672.0,1573.5 2687.2,1573.5C2702.4,1573.5 2717.6,1573.7 2732.8,1573.7C2748.0,1573.7 2763.2,1573.5 2778.4,1573.5C2793.7,1573.5 2808.9,1573.6 2824.1,1573.6C2839.3,1573.6 2854.5,1573.5 2869.7,1573.5C2884.9,1573.5 2900.1,1573.2 2915.3,1573.2C2930.5,1573.2 2945.7,1573.3 2960.9,1573.3C2976.1,1573.3 2991.3,1573.3 3006.5,1573.3C3021.7,1573.4 3036.9,1573.4 3052.2,1573.4C3067.4,1573.4 3082.6,1573.4 3097.8,1573.4C3113.0,1573.4 3128.2,1573.5 3143.4,1573.5C3158.6,1573.6 3173.8,1573.6 3189.0,1573.6" fill="none" stroke="#f27a2a" stroke-width="2.4"/><path d="M452.0,1557.4C467.2,1557.2 482.4,1557.0 497.6,1557.0C512.8,1557.0 528.0,1557.8 543.2,1557.8C558.4,1557.8 573.6,1557.3 588.9,1557.2C604.1,1557.0 619.3,1557.1 634.5,1557.0C649.7,1556.8 664.9,1536.0 680.1,1536.0C695.3,1536.0 710.5,1559.0 725.7,1559.0C740.9,1559.0 756.1,1558.8 771.3,1558.7C786.5,1558.7 801.7,1558.7 816.9,1558.6C832.1,1558.6 847.3,1557.3 862.5,1557.3C877.8,1557.3 893.0,1558.1 908.2,1558.1C923.4,1558.1 938.6,1557.6 953.8,1557.5C969.0,1557.3 984.2,1557.3 999.4,1557.2C1014.6,1557.1 1029.8,1557.1 1045.0,1557.1C1060.2,1557.1 1075.4,1557.1 1090.6,1557.3C1105.8,1557.5 1121.0,1559.0 1136.2,1559.0C1151.5,1559.0 1166.7,1558.8 1181.9,1558.8C1197.1,1558.8 1212.3,1558.7 1227.5,1558.7C1242.7,1558.7 1257.9,1558.7 1273.1,1558.7C1288.3,1558.7 1303.5,1557.3 1318.7,1557.3C1333.9,1557.3 1349.1,1557.4 1364.3,1557.5C1379.5,1557.7 1394.7,1558.1 1410.0,1558.3C1425.2,1558.5 1440.4,1558.5 1455.6,1558.6C1470.8,1558.6 1486.0,1558.8 1501.2,1558.9C1516.4,1558.9 1531.6,1558.9 1546.8,1558.9C1562.0,1558.9 1577.2,1557.0 1592.4,1557.0C1607.6,1557.0 1622.8,1558.1 1638.0,1558.3C1653.2,1558.4 1668.4,1558.4 1683.7,1558.4C1698.9,1558.4 1714.1,1553.0 1729.3,1553.0C1744.5,1553.0 1759.7,1556.8 1774.9,1557.2C1790.1,1557.7 1805.3,1557.9 1820.5,1557.9C1835.7,1557.9 1850.9,1557.0 1866.1,1557.0C1881.3,1557.0 1896.5,1559.0 1911.7,1559.0C1926.9,1559.0 1942.1,1559.0 1957.3,1558.9C1972.6,1558.8 1987.8,1558.3 2003.0,1558.1C2018.2,1557.9 2033.4,1557.5 2048.6,1557.5C2063.8,1557.5 2079.0,1559.0 2094.2,1559.0C2109.4,1559.0 2124.6,1558.2 2139.8,1558.2C2155.0,1558.2 2170.2,1558.9 2185.4,1558.9C2200.6,1558.9 2215.8,1558.9 2231.1,1558.8C2246.3,1558.8 2261.5,1556.0 2276.7,1556.0C2291.9,1556.0 2307.1,1557.5 2322.3,1557.8C2337.5,1558.1 2352.7,1558.2 2367.9,1558.2C2383.1,1558.2 2398.3,1558.0 2413.5,1557.8C2428.7,1557.7 2443.9,1557.2 2459.1,1557.2C2474.3,1557.2 2489.5,1557.3 2504.8,1557.5C2520.0,1557.8 2535.2,1558.8 2550.4,1558.8C2565.6,1558.8 2580.8,1556.9 2596.0,1556.9C2611.2,1556.9 2626.4,1556.9 2641.6,1556.9C2656.8,1556.9 2672.0,1558.3 2687.2,1558.3C2702.4,1558.3 2717.6,1557.5 2732.8,1557.5C2748.0,1557.5 2763.2,1558.1 2778.4,1558.1C2793.7,1558.1 2808.9,1558.0 2824.1,1557.9C2839.3,1557.9 2854.5,1557.6 2869.7,1557.6C2884.9,1557.6 2900.1,1559.2 2915.3,1559.2C2930.5,1559.2 2945.7,1557.3 2960.9,1557.3C2976.1,1557.3 2991.3,1557.8 3006.5,1557.8C3021.7,1557.8 3036.9,1557.3 3052.2,1557.3C3067.4,1557.3 3082.6,1558.3 3097.8,1558.3C3113.0,1558.3 3128.2,1557.5 3143.4,1557.5C3158.6,1557.5 3173.8,1557.6 3189.0,1557.7" fill="none" stroke="#2f74f2" stroke-width="2.1"/><path d="M452.0,1574.0C467.2,1574.0 482.4,1574.0 497.6,1574.0C512.8,1574.0 528.0,1574.0 543.2,1574.0C558.4,1574.0 573.6,1574.0 588.9,1574.0C604.1,1574.0 619.3,1543.0 634.5,1543.0C649.7,1543.0 664.9,1574.0 680.1,1574.0C695.3,1574.0 710.5,1574.0 725.7,1574.0C740.9,1574.0 756.1,1574.0 771.3,1574.0C786.5,1574.0 801.7,1574.0 816.9,1574.0C832.1,1574.0 847.3,1574.0 862.5,1574.0C877.8,1574.0 893.0,1529.0 908.2,1529.0C923.4,1529.0 938.6,1542.5 953.8,1550.0C969.0,1557.5 984.2,1574.0 999.4,1574.0C1014.6,1574.0 1029.8,1574.0 1045.0,1574.0C1060.2,1574.0 1075.4,1521.0 1090.6,1521.0C1105.8,1521.0 1121.0,1574.0 1136.2,1574.0C1151.5,1574.0 1166.7,1574.0 1181.9,1574.0C1197.1,1574.0 1212.3,1574.0 1227.5,1574.0C1242.7,1574.0 1257.9,1574.0 1273.1,1574.0C1288.3,1574.0 1303.5,1574.0 1318.7,1574.0C1333.9,1574.0 1349.1,1529.0 1364.3,1529.0C1379.5,1529.0 1394.7,1574.0 1410.0,1574.0C1425.2,1574.0 1440.4,1523.0 1455.6,1523.0C1470.8,1523.0 1486.0,1574.0 1501.2,1574.0C1516.4,1574.0 1531.6,1574.0 1546.8,1574.0C1562.0,1574.0 1577.2,1552.0 1592.4,1552.0C1607.6,1552.0 1622.8,1558.3 1638.0,1562.0C1653.2,1565.7 1668.4,1574.0 1683.7,1574.0C1698.9,1574.0 1714.1,1574.0 1729.3,1574.0C1744.5,1574.0 1759.7,1574.0 1774.9,1574.0C1790.1,1574.0 1805.3,1529.0 1820.5,1529.0C1835.7,1529.0 1850.9,1529.7 1866.1,1531.0C1881.3,1532.3 1896.5,1574.0 1911.7,1574.0C1926.9,1574.0 1942.1,1574.0 1957.3,1574.0C1972.6,1574.0 1987.8,1574.0 2003.0,1574.0C2018.2,1574.0 2033.4,1549.0 2048.6,1549.0C2063.8,1549.0 2079.0,1574.0 2094.2,1574.0C2109.4,1574.0 2124.6,1574.0 2139.8,1574.0C2155.0,1574.0 2170.2,1574.0 2185.4,1574.0C2200.6,1574.0 2215.8,1548.8 2231.1,1541.0C2246.3,1533.2 2261.5,1527.0 2276.7,1527.0C2291.9,1527.0 2307.1,1574.0 2322.3,1574.0C2337.5,1574.0 2352.7,1524.0 2367.9,1524.0C2383.1,1524.0 2398.3,1574.0 2413.5,1574.0C2428.7,1574.0 2443.9,1574.0 2459.1,1574.0C2474.3,1574.0 2489.5,1543.0 2504.8,1543.0C2520.0,1543.0 2535.2,1574.0 2550.4,1574.0C2565.6,1574.0 2580.8,1574.0 2596.0,1574.0C2611.2,1574.0 2626.4,1574.0 2641.6,1574.0C2656.8,1574.0 2672.0,1553.5 2687.2,1546.0C2702.4,1538.5 2717.6,1529.0 2732.8,1529.0C2748.0,1529.0 2763.2,1574.0 2778.4,1574.0C2793.7,1574.0 2808.9,1535.0 2824.1,1535.0C2839.3,1535.0 2854.5,1574.0 2869.7,1574.0C2884.9,1574.0 2900.1,1574.0 2915.3,1574.0C2930.5,1574.0 2945.7,1538.0 2960.9,1538.0C2976.1,1538.0 2991.3,1574.0 3006.5,1574.0C3021.7,1574.0 3036.9,1574.0 3052.2,1574.0C3067.4,1574.0 3082.6,1574.0 3097.8,1574.0C3113.0,1574.0 3128.2,1565.3 3143.4,1556.0C3158.6,1546.7 3173.8,1532.3 3189.0,1518.0" fill="none" stroke="#21c4e8" stroke-width="2.1"/><path d="M452.0,1567.2C467.2,1567.7 482.4,1568.1 497.6,1568.1C512.8,1568.1 528.0,1567.6 543.2,1567.6C558.4,1567.6 573.6,1568.3 588.9,1568.3C604.1,1568.4 619.3,1568.4 634.5,1568.4C649.7,1568.4 664.9,1566.8 680.1,1566.7C695.3,1566.6 710.5,1566.5 725.7,1566.5C740.9,1566.5 756.1,1569.0 771.3,1569.0C786.5,1569.0 801.7,1459.0 816.9,1459.0C832.1,1459.0 847.3,1565.7 862.5,1567.2C877.8,1568.7 893.0,1569.5 908.2,1569.5C923.4,1569.5 938.6,1567.9 953.8,1567.9C969.0,1567.9 984.2,1569.0 999.4,1569.0C1014.6,1569.0 1029.8,1567.9 1045.0,1567.9C1060.2,1567.9 1075.4,1568.4 1090.6,1568.4C1105.8,1568.4 1121.0,1567.0 1136.2,1567.0C1151.5,1567.0 1166.7,1568.0 1181.9,1568.4C1197.1,1568.8 1212.3,1569.1 1227.5,1569.1C1242.7,1569.1 1257.9,1444.0 1273.1,1444.0C1288.3,1444.0 1303.5,1568.7 1318.7,1568.7C1333.9,1568.7 1349.1,1568.7 1364.3,1568.5C1379.5,1568.4 1394.7,1566.7 1410.0,1566.7C1425.2,1566.7 1440.4,1568.8 1455.6,1568.8C1470.8,1568.8 1486.0,1568.5 1501.2,1568.3C1516.4,1568.0 1531.6,1567.7 1546.8,1567.4C1562.0,1567.1 1577.2,1566.6 1592.4,1566.6C1607.6,1566.6 1622.8,1569.1 1638.0,1569.1C1653.2,1569.1 1668.4,1568.7 1683.7,1567.9C1698.9,1567.1 1714.1,1446.0 1729.3,1446.0C1744.5,1446.0 1759.7,1569.1 1774.9,1569.1C1790.1,1569.1 1805.3,1568.6 1820.5,1568.6C1835.7,1568.6 1850.9,1569.3 1866.1,1569.3C1881.3,1569.3 1896.5,1567.7 1911.7,1567.7C1926.9,1567.7 1942.1,1568.9 1957.3,1568.9C1972.6,1568.9 1987.8,1567.8 2003.0,1567.8C2018.2,1567.8 2033.4,1569.3 2048.6,1569.3C2063.8,1569.3 2079.0,1569.3 2094.2,1569.1C2109.4,1569.0 2124.6,1568.4 2139.8,1566.8C2155.0,1565.2 2170.2,1464.0 2185.4,1464.0C2200.6,1464.0 2215.8,1565.7 2231.1,1567.2C2246.3,1568.6 2261.5,1569.4 2276.7,1569.4C2291.9,1569.4 2307.1,1567.8 2322.3,1567.8C2337.5,1567.8 2352.7,1568.4 2367.9,1568.4C2383.1,1568.4 2398.3,1567.4 2413.5,1567.4C2428.7,1567.4 2443.9,1568.0 2459.1,1568.0C2474.3,1568.0 2489.5,1567.7 2504.8,1567.7C2520.0,1567.6 2535.2,1567.6 2550.4,1567.6C2565.6,1567.6 2580.8,1568.3 2596.0,1568.3C2611.2,1568.3 2626.4,1460.5 2641.6,1460.5C2656.8,1460.5 2672.0,1569.2 2687.2,1569.2C2702.4,1569.2 2717.6,1568.5 2732.8,1568.5C2748.0,1568.5 2763.2,1569.3 2778.4,1569.3C2793.7,1569.3 2808.9,1569.1 2824.1,1569.1C2839.3,1569.1 2854.5,1569.5 2869.7,1569.5C2884.9,1569.5 2900.1,1568.9 2915.3,1568.5C2930.5,1568.1 2945.7,1567.0 2960.9,1567.0C2976.1,1567.0 2991.3,1568.9 3006.5,1569.1C3021.7,1569.3 3036.9,1569.4 3052.2,1569.4C3067.4,1569.4 3082.6,1456.0 3097.8,1456.0C3113.0,1456.0 3128.2,1567.9 3143.4,1568.2C3158.6,1568.5 3173.8,1568.6 3189.0,1568.6" fill="none" stroke="#25c7ea" stroke-width="2.1"/><path d="M452.0,1562.4C467.2,1562.4 482.4,1562.4 497.6,1562.3C512.8,1562.3 528.0,1559.7 543.2,1559.7C558.4,1559.7 573.6,1559.7 588.9,1559.8C604.1,1559.8 619.3,1562.0 634.5,1562.0C649.7,1562.0 664.9,1561.8 680.1,1561.7C695.3,1561.6 710.5,1561.6 725.7,1561.5C740.9,1561.4 756.1,1561.1 771.3,1560.4C786.5,1559.7 801.7,1454.0 816.9,1454.0C832.1,1454.0 847.3,1561.3 862.5,1561.3C877.8,1561.3 893.0,1561.3 908.2,1561.2C923.4,1561.2 938.6,1560.0 953.8,1560.0C969.0,1560.0 984.2,1560.8 999.4,1560.8C1014.6,1560.8 1029.8,1560.7 1045.0,1560.7C1060.2,1560.7 1075.4,1561.4 1090.6,1561.7C1105.8,1562.0 1121.0,1562.5 1136.2,1562.5C1151.5,1562.5 1166.7,1562.4 1181.9,1562.3C1197.1,1562.3 1212.3,1561.9 1227.5,1561.1C1242.7,1560.3 1257.9,1439.0 1273.1,1439.0C1288.3,1439.0 1303.5,1560.3 1318.7,1560.3C1333.9,1560.3 1349.1,1559.6 1364.3,1559.6C1379.5,1559.6 1394.7,1559.6 1410.0,1559.6C1425.2,1559.6 1440.4,1560.9 1455.6,1560.9C1470.8,1560.9 1486.0,1560.5 1501.2,1560.5C1516.4,1560.5 1531.6,1560.5 1546.8,1560.6C1562.0,1560.8 1577.2,1562.2 1592.4,1562.2C1607.6,1562.2 1622.8,1561.1 1638.0,1561.1C1653.2,1561.1 1668.4,1561.2 1683.7,1561.2C1698.9,1561.2 1714.1,1441.0 1729.3,1441.0C1744.5,1441.0 1759.7,1559.0 1774.9,1559.6C1790.1,1560.2 1805.3,1560.5 1820.5,1560.5C1835.7,1560.5 1850.9,1559.9 1866.1,1559.9C1881.3,1559.9 1896.5,1560.6 1911.7,1561.0C1926.9,1561.5 1942.1,1562.5 1957.3,1562.5C1972.6,1562.5 1987.8,1561.9 2003.0,1561.5C2018.2,1561.1 2033.4,1560.0 2048.6,1560.0C2063.8,1560.0 2079.0,1562.2 2094.2,1562.2C2109.4,1562.2 2124.6,1562.1 2139.8,1561.9C2155.0,1561.7 2170.2,1452.0 2185.4,1452.0C2200.6,1452.0 2215.8,1562.2 2231.1,1562.2C2246.3,1562.2 2261.5,1561.8 2276.7,1561.8C2291.9,1561.8 2307.1,1561.9 2322.3,1561.9C2337.5,1561.9 2352.7,1560.6 2367.9,1560.6C2383.1,1560.6 2398.3,1562.4 2413.5,1562.4C2428.7,1562.4 2443.9,1562.4 2459.1,1562.4C2474.3,1562.3 2489.5,1560.0 2504.8,1560.0C2520.0,1560.0 2535.2,1561.8 2550.4,1561.8C2565.6,1561.8 2580.8,1561.7 2596.0,1561.6C2611.2,1561.6 2626.4,1451.0 2641.6,1451.0C2656.8,1451.0 2672.0,1561.1 2687.2,1561.1C2702.4,1561.1 2717.6,1561.0 2732.8,1561.0C2748.0,1561.0 2763.2,1562.3 2778.4,1562.3C2793.7,1562.3 2808.9,1561.0 2824.1,1561.0C2839.3,1561.0 2854.5,1562.0 2869.7,1562.0C2884.9,1562.0 2900.1,1560.6 2915.3,1560.6C2930.5,1560.6 2945.7,1562.1 2960.9,1562.1C2976.1,1562.2 2991.3,1562.2 3006.5,1562.2C3021.7,1562.2 3036.9,1561.8 3052.2,1560.9C3067.4,1560.0 3082.6,1448.0 3097.8,1448.0C3113.0,1448.0 3128.2,1562.3 3143.4,1562.3C3158.6,1562.3 3173.8,1562.0 3189.0,1561.7" fill="none" stroke="#1fc0e6" stroke-width="2.1"/><path d="M452.0,1557.9C467.2,1559.0 482.4,1560.0 497.6,1560.0C512.8,1560.0 528.0,1560.0 543.2,1559.8C558.4,1559.6 573.6,1558.3 588.9,1558.3C604.1,1558.3 619.3,1559.0 634.5,1559.0C649.7,1559.0 664.9,1558.8 680.1,1558.8C695.3,1558.8 710.5,1559.3 725.7,1559.5C740.9,1559.6 756.1,1559.9 771.3,1559.9C786.5,1559.9 801.7,1417.6 816.9,1417.6C832.1,1417.6 847.3,1556.0 862.5,1557.6C877.8,1559.2 893.0,1560.0 908.2,1560.0C923.4,1560.0 938.6,1558.8 953.8,1558.8C969.0,1558.8 984.2,1559.8 999.4,1559.8C1014.6,1559.8 1029.8,1557.5 1045.0,1557.5C1060.2,1557.5 1075.4,1558.5 1090.6,1558.8C1105.8,1559.2 1121.0,1559.7 1136.2,1559.7C1151.5,1559.7 1166.7,1558.2 1181.9,1558.2C1197.1,1558.2 1212.3,1560.3 1227.5,1560.3C1242.7,1560.3 1257.9,1409.0 1273.1,1409.0C1288.3,1409.0 1303.5,1557.6 1318.7,1557.6C1333.9,1557.6 1349.1,1557.6 1364.3,1557.6C1379.5,1557.6 1394.7,1558.7 1410.0,1559.1C1425.2,1559.6 1440.4,1560.3 1455.6,1560.3C1470.8,1560.3 1486.0,1559.0 1501.2,1558.6C1516.4,1558.3 1531.6,1558.1 1546.8,1558.1C1562.0,1558.1 1577.2,1558.8 1592.4,1558.8C1607.6,1558.8 1622.8,1557.6 1638.0,1557.6C1653.2,1557.6 1668.4,1558.2 1683.7,1558.2C1698.9,1558.2 1714.1,1409.0 1729.3,1409.0C1744.5,1409.0 1759.7,1559.0 1774.9,1559.0C1790.1,1559.0 1805.3,1558.2 1820.5,1558.2C1835.7,1558.2 1850.9,1558.2 1866.1,1558.2C1881.3,1558.2 1896.5,1558.2 1911.7,1558.2C1926.9,1558.2 1942.1,1558.9 1957.3,1558.9C1972.6,1558.9 1987.8,1558.6 2003.0,1558.4C2018.2,1558.2 2033.4,1557.6 2048.6,1557.6C2063.8,1557.6 2079.0,1560.0 2094.2,1560.0C2109.4,1560.0 2124.6,1559.7 2139.8,1559.2C2155.0,1558.6 2170.2,1414.5 2185.4,1414.5C2200.6,1414.5 2215.8,1556.4 2231.1,1558.1C2246.3,1559.7 2261.5,1560.5 2276.7,1560.5C2291.9,1560.5 2307.1,1560.3 2322.3,1560.1C2337.5,1559.8 2352.7,1557.9 2367.9,1557.9C2383.1,1557.9 2398.3,1558.2 2413.5,1558.5C2428.7,1558.8 2443.9,1559.7 2459.1,1559.7C2474.3,1559.7 2489.5,1559.6 2504.8,1559.6C2520.0,1559.6 2535.2,1560.3 2550.4,1560.3C2565.6,1560.3 2580.8,1559.8 2596.0,1558.8C2611.2,1557.7 2626.4,1390.0 2641.6,1390.0C2656.8,1390.0 2672.0,1559.5 2687.2,1559.5C2702.4,1559.5 2717.6,1558.4 2732.8,1558.4C2748.0,1558.4 2763.2,1559.0 2778.4,1559.3C2793.7,1559.6 2808.9,1560.1 2824.1,1560.1C2839.3,1560.1 2854.5,1560.1 2869.7,1560.0C2884.9,1560.0 2900.1,1559.0 2915.3,1559.0C2930.5,1559.0 2945.7,1559.3 2960.9,1559.3C2976.1,1559.3 2991.3,1557.6 3006.5,1557.6C3021.7,1557.6 3036.9,1558.2 3052.2,1558.2C3067.4,1558.2 3082.6,1403.0 3097.8,1403.0C3113.0,1403.0 3128.2,1558.7 3143.4,1558.7C3158.6,1558.7 3173.8,1558.4 3189.0,1558.0" fill="none" stroke="#8f5fe8" stroke-width="2.1"/><path d="M452.0,1574.0C467.2,1574.0 482.4,1574.0 497.6,1574.0C512.8,1574.0 528.0,1574.0 543.2,1574.0C558.4,1574.0 573.6,1574.0 588.9,1574.0C604.1,1574.0 619.3,1574.0 634.5,1574.0C649.7,1574.0 664.9,1574.0 680.1,1574.0C695.3,1574.0 710.5,1574.0 725.7,1574.0C740.9,1574.0 756.1,1574.0 771.3,1574.0C786.5,1574.0 801.7,1574.0 816.9,1574.0C832.1,1574.0 847.3,1574.0 862.5,1574.0C877.8,1574.0 893.0,1054.0 908.2,1054.0C923.4,1054.0 938.6,1574.0 953.8,1574.0C969.0,1574.0 984.2,1574.0 999.4,1574.0C1014.6,1574.0 1029.8,1574.0 1045.0,1574.0C1060.2,1574.0 1075.4,1574.0 1090.6,1574.0C1105.8,1574.0 1121.0,1574.0 1136.2,1574.0C1151.5,1574.0 1166.7,1574.0 1181.9,1574.0C1197.1,1574.0 1212.3,1574.0 1227.5,1574.0C1242.7,1574.0 1257.9,1574.0 1273.1,1574.0C1288.3,1574.0 1303.5,1574.0 1318.7,1574.0C1333.9,1574.0 1349.1,1079.0 1364.3,1079.0C1379.5,1079.0 1394.7,1574.0 1410.0,1574.0C1425.2,1574.0 1440.4,1574.0 1455.6,1574.0C1470.8,1574.0 1486.0,1574.0 1501.2,1574.0C1516.4,1574.0 1531.6,1574.0 1546.8,1574.0C1562.0,1574.0 1577.2,1574.0 1592.4,1574.0C1607.6,1574.0 1622.8,1574.0 1638.0,1574.0C1653.2,1574.0 1668.4,1574.0 1683.7,1574.0C1698.9,1574.0 1714.1,1574.0 1729.3,1574.0C1744.5,1574.0 1759.7,1574.0 1774.9,1574.0C1790.1,1574.0 1805.3,1073.0 1820.5,1073.0C1835.7,1073.0 1850.9,1574.0 1866.1,1574.0C1881.3,1574.0 1896.5,1574.0 1911.7,1574.0C1926.9,1574.0 1942.1,1574.0 1957.3,1574.0C1972.6,1574.0 1987.8,1574.0 2003.0,1574.0C2018.2,1574.0 2033.4,1574.0 2048.6,1574.0C2063.8,1574.0 2079.0,1574.0 2094.2,1574.0C2109.4,1574.0 2124.6,1574.0 2139.8,1574.0C2155.0,1574.0 2170.2,1574.0 2185.4,1574.0C2200.6,1574.0 2215.8,1574.0 2231.1,1574.0C2246.3,1574.0 2261.5,1067.0 2276.7,1067.0C2291.9,1067.0 2307.1,1574.0 2322.3,1574.0C2337.5,1574.0 2352.7,1574.0 2367.9,1574.0C2383.1,1574.0 2398.3,1574.0 2413.5,1574.0C2428.7,1574.0 2443.9,1574.0 2459.1,1574.0C2474.3,1574.0 2489.5,1574.0 2504.8,1574.0C2520.0,1574.0 2535.2,1574.0 2550.4,1574.0C2565.6,1574.0 2580.8,1574.0 2596.0,1574.0C2611.2,1574.0 2626.4,1574.0 2641.6,1574.0C2656.8,1574.0 2672.0,1574.0 2687.2,1574.0C2702.4,1574.0 2717.6,1062.5 2732.8,1062.5C2748.0,1062.5 2763.2,1574.0 2778.4,1574.0C2793.7,1574.0 2808.9,1574.0 2824.1,1574.0C2839.3,1574.0 2854.5,1574.0 2869.7,1574.0C2884.9,1574.0 2900.1,1574.0 2915.3,1574.0C2930.5,1574.0 2945.7,1574.0 2960.9,1574.0C2976.1,1574.0 2991.3,1574.0 3006.5,1574.0C3021.7,1574.0 3036.9,1574.0 3052.2,1574.0C3067.4,1574.0 3082.6,1574.0 3097.8,1574.0C3113.0,1574.0 3128.2,1574.0 3143.4,1574.0C3158.6,1574.0 3173.8,1254.5 3189.0,935.0" fill="none" stroke="#8f5fe8" stroke-width="2.1"/><path d="M452.0,1496.5C467.2,1496.2 482.4,1496.0 497.6,1496.0C512.8,1496.0 528.0,1501.5 543.2,1501.5C558.4,1501.5 573.6,1494.0 588.9,1494.0C604.1,1494.0 619.3,1501.5 634.5,1501.5C649.7,1501.5 664.9,1484.7 680.1,1484.7C695.3,1484.7 710.5,1497.8 725.7,1497.8C740.9,1497.8 756.1,1495.0 771.3,1495.0C786.5,1495.0 801.7,1498.7 816.9,1498.7C832.1,1498.7 847.3,1494.7 862.5,1494.7C877.8,1494.7 893.0,1497.0 908.2,1499.0C923.4,1501.0 938.6,1507.0 953.8,1507.0C969.0,1507.0 984.2,1505.5 999.4,1502.4C1014.6,1499.3 1029.8,1480.7 1045.0,1480.7C1060.2,1480.7 1075.4,1496.0 1090.6,1496.0C1105.8,1496.0 1121.0,1492.0 1136.2,1492.0C1151.5,1492.0 1166.7,1494.7 1181.9,1494.7C1197.1,1494.7 1212.3,1479.7 1227.5,1479.7C1242.7,1479.7 1257.9,1491.0 1273.1,1493.0C1288.3,1495.0 1303.5,1496.0 1318.7,1496.0C1333.9,1496.0 1349.1,1491.0 1364.3,1491.0C1379.5,1491.0 1394.7,1501.5 1410.0,1501.5C1425.2,1501.5 1440.4,1485.0 1455.6,1485.0C1470.8,1485.0 1486.0,1493.3 1501.2,1496.0C1516.4,1498.7 1531.6,1501.0 1546.8,1501.0C1562.0,1501.0 1577.2,1497.0 1592.4,1497.0C1607.6,1497.0 1622.8,1500.0 1638.0,1500.0C1653.2,1500.0 1668.4,1496.0 1683.7,1496.0C1698.9,1496.0 1714.1,1497.8 1729.3,1497.8C1744.5,1497.8 1759.7,1487.0 1774.9,1487.0C1790.1,1487.0 1805.3,1490.5 1820.5,1492.0C1835.7,1493.5 1850.9,1496.0 1866.1,1496.0C1881.3,1496.0 1896.5,1492.0 1911.7,1492.0C1926.9,1492.0 1942.1,1495.3 1957.3,1495.3C1972.6,1495.3 1987.8,1492.0 2003.0,1492.0C2018.2,1492.0 2033.4,1494.0 2048.6,1494.0C2063.8,1494.0 2079.0,1487.0 2094.2,1487.0C2109.4,1487.0 2124.6,1492.9 2139.8,1494.7C2155.0,1496.5 2170.2,1497.8 2185.4,1497.8C2200.6,1497.8 2215.8,1497.5 2231.1,1497.0C2246.3,1496.5 2261.5,1487.8 2276.7,1487.8C2291.9,1487.8 2307.1,1495.0 2322.3,1495.0C2337.5,1495.0 2352.7,1493.0 2367.9,1493.0C2383.1,1493.0 2398.3,1497.0 2413.5,1497.0C2428.7,1497.0 2443.9,1497.0 2459.1,1497.0C2474.3,1497.0 2489.5,1495.2 2504.8,1492.0C2520.0,1488.8 2535.2,1477.6 2550.4,1477.6C2565.6,1477.6 2580.8,1487.8 2596.0,1487.8C2611.2,1487.8 2626.4,1482.0 2641.6,1482.0C2656.8,1482.0 2672.0,1486.0 2687.2,1488.4C2702.4,1490.8 2717.6,1496.5 2732.8,1496.5C2748.0,1496.5 2763.2,1491.0 2778.4,1491.0C2793.7,1491.0 2808.9,1494.0 2824.1,1494.0C2839.3,1494.0 2854.5,1483.0 2869.7,1483.0C2884.9,1483.0 2900.1,1495.8 2915.3,1495.8C2930.5,1495.8 2945.7,1495.8 2960.9,1495.8C2976.1,1495.8 2991.3,1495.8 3006.5,1495.8C3021.7,1495.8 3036.9,1508.5 3052.2,1508.5C3067.4,1508.5 3082.6,1492.7 3097.8,1491.0C3113.0,1489.3 3128.2,1490.1 3143.4,1488.4C3158.6,1486.7 3173.8,1477.7 3189.0,1468.7" fill="none" stroke="#2fc496" stroke-width="2.1"/><path d="M452.0,1428.0C467.2,1422.5 482.4,1417.0 497.6,1417.0C512.8,1417.0 528.0,1432.5 543.2,1432.5C558.4,1432.5 573.6,1411.3 588.9,1406.0C604.1,1400.7 619.3,1398.0 634.5,1398.0C649.7,1398.0 664.9,1399.0 680.1,1401.0C695.3,1403.0 710.5,1415.5 725.7,1415.5C740.9,1415.5 756.1,1401.7 771.3,1401.0C786.5,1400.3 801.7,1400.0 816.9,1400.0C832.1,1400.0 847.3,1421.0 862.5,1422.6C877.8,1424.2 893.0,1424.1 908.2,1425.0C923.4,1425.9 938.6,1426.2 953.8,1428.0C969.0,1429.8 984.2,1435.6 999.4,1435.6C1014.6,1435.6 1029.8,1410.1 1045.0,1401.5C1060.2,1392.9 1075.4,1384.0 1090.6,1384.0C1105.8,1384.0 1121.0,1413.0 1136.2,1413.0C1151.5,1413.0 1166.7,1412.7 1181.9,1412.0C1197.1,1411.3 1212.3,1401.3 1227.5,1398.4C1242.7,1395.5 1257.9,1394.0 1273.1,1394.0C1288.3,1394.0 1303.5,1414.5 1318.7,1414.5C1333.9,1414.5 1349.1,1405.0 1364.3,1405.0C1379.5,1405.0 1394.7,1425.7 1410.0,1425.7C1425.2,1425.7 1440.4,1363.6 1455.6,1363.6C1470.8,1363.6 1486.0,1409.5 1501.2,1416.0C1516.4,1422.5 1531.6,1425.7 1546.8,1425.7C1562.0,1425.7 1577.2,1400.0 1592.4,1400.0C1607.6,1400.0 1622.8,1415.5 1638.0,1415.5C1653.2,1415.5 1668.4,1414.3 1683.7,1412.4C1698.9,1410.5 1714.1,1407.1 1729.3,1404.0C1744.5,1400.9 1759.7,1394.0 1774.9,1394.0C1790.1,1394.0 1805.3,1398.4 1820.5,1398.4C1835.7,1398.4 1850.9,1380.0 1866.1,1380.0C1881.3,1380.0 1896.5,1410.3 1911.7,1413.0C1926.9,1415.7 1942.1,1417.0 1957.3,1417.0C1972.6,1417.0 1987.8,1408.3 2003.0,1404.6C2018.2,1400.9 2033.4,1399.3 2048.6,1395.0C2063.8,1390.7 2079.0,1379.0 2094.2,1379.0C2109.4,1379.0 2124.6,1415.5 2139.8,1415.5C2155.0,1415.5 2170.2,1406.9 2185.4,1403.0C2200.6,1399.1 2215.8,1392.0 2231.1,1392.0C2246.3,1392.0 2261.5,1400.4 2276.7,1403.0C2291.9,1405.6 2307.1,1407.7 2322.3,1407.7C2337.5,1407.7 2352.7,1364.8 2367.9,1364.8C2383.1,1364.8 2398.3,1394.4 2413.5,1404.6C2428.7,1414.8 2443.9,1426.0 2459.1,1426.0C2474.3,1426.0 2489.5,1403.7 2504.8,1395.0C2520.0,1386.3 2535.2,1374.0 2550.4,1374.0C2565.6,1374.0 2580.8,1389.0 2596.0,1389.0C2611.2,1389.0 2626.4,1381.0 2641.6,1379.0C2656.8,1377.0 2672.0,1376.0 2687.2,1376.0C2702.4,1376.0 2717.6,1411.0 2732.8,1411.0C2748.0,1411.0 2763.2,1398.5 2778.4,1393.8C2793.7,1389.1 2808.9,1382.6 2824.1,1382.6C2839.3,1382.6 2854.5,1395.3 2869.7,1401.8C2884.9,1408.3 2900.1,1421.5 2915.3,1421.5C2930.5,1421.5 2945.7,1398.0 2960.9,1398.0C2976.1,1398.0 2991.3,1400.3 3006.5,1405.0C3021.7,1409.7 3036.9,1446.4 3052.2,1446.4C3067.4,1446.4 3082.6,1409.5 3097.8,1400.0C3113.0,1390.5 3128.2,1391.1 3143.4,1385.8C3158.6,1380.5 3173.8,1374.4 3189.0,1368.3" fill="none" stroke="#f4862c" stroke-width="2.1"/><path d="M452.0,1367.0C467.2,1351.5 482.4,1336.0 497.6,1336.0C512.8,1336.0 528.0,1366.0 543.2,1366.0C558.4,1366.0 573.6,1336.0 588.9,1336.0C604.1,1336.0 619.3,1356.0 634.5,1356.0C649.7,1356.0 664.9,1308.0 680.1,1308.0C695.3,1308.0 710.5,1344.0 725.7,1344.0C740.9,1344.0 756.1,1343.2 771.3,1342.5C786.5,1341.8 801.7,1340.0 816.9,1340.0C832.1,1340.0 847.3,1351.0 862.5,1351.0C877.8,1351.0 893.0,1345.6 908.2,1345.6C923.4,1345.6 938.6,1388.0 953.8,1388.0C969.0,1388.0 984.2,1376.3 999.4,1363.0C1014.6,1349.7 1029.8,1308.0 1045.0,1308.0C1060.2,1308.0 1075.4,1356.0 1090.6,1356.0C1105.8,1356.0 1121.0,1341.7 1136.2,1338.0C1151.5,1334.3 1166.7,1336.2 1181.9,1332.5C1197.1,1328.8 1212.3,1311.4 1227.5,1311.4C1242.7,1311.4 1257.9,1321.7 1273.1,1327.0C1288.3,1332.3 1303.5,1343.0 1318.7,1343.0C1333.9,1343.0 1349.1,1327.0 1364.3,1327.0C1379.5,1327.0 1394.7,1365.0 1410.0,1365.0C1425.2,1365.0 1440.4,1304.6 1455.6,1304.6C1470.8,1304.6 1486.0,1319.6 1501.2,1327.0C1516.4,1334.3 1531.6,1347.8 1546.8,1348.7C1562.0,1349.6 1577.2,1350.0 1592.4,1350.0C1607.6,1350.0 1622.8,1346.5 1638.0,1345.0C1653.2,1343.5 1668.4,1341.0 1683.7,1341.0C1698.9,1341.0 1714.1,1348.7 1729.3,1348.7C1744.5,1348.7 1759.7,1325.0 1774.9,1323.0C1790.1,1321.0 1805.3,1320.0 1820.5,1320.0C1835.7,1320.0 1850.9,1335.7 1866.1,1335.7C1881.3,1335.7 1896.5,1314.0 1911.7,1314.0C1926.9,1314.0 1942.1,1352.4 1957.3,1352.4C1972.6,1352.4 1987.8,1338.8 2003.0,1338.8C2018.2,1338.8 2033.4,1339.4 2048.6,1339.4C2063.8,1339.4 2079.0,1296.5 2094.2,1296.5C2109.4,1296.5 2124.6,1325.8 2139.8,1336.0C2155.0,1346.2 2170.2,1358.0 2185.4,1358.0C2200.6,1358.0 2215.8,1352.3 2231.1,1345.6C2246.3,1338.9 2261.5,1317.6 2276.7,1317.6C2291.9,1317.6 2307.1,1338.8 2322.3,1338.8C2337.5,1338.8 2352.7,1334.7 2367.9,1334.7C2383.1,1334.7 2398.3,1334.7 2413.5,1334.7C2428.7,1334.7 2443.9,1363.6 2459.1,1363.6C2474.3,1363.6 2489.5,1338.5 2504.8,1325.4C2520.0,1312.3 2535.2,1285.0 2550.4,1285.0C2565.6,1285.0 2580.8,1303.7 2596.0,1303.7C2611.2,1303.7 2626.4,1302.0 2641.6,1301.5C2656.8,1301.0 2672.0,1300.6 2687.2,1300.6C2702.4,1300.6 2717.6,1337.9 2732.8,1337.9C2748.0,1337.9 2763.2,1321.0 2778.4,1321.0C2793.7,1321.0 2808.9,1348.0 2824.1,1348.0C2839.3,1348.0 2854.5,1307.7 2869.7,1307.7C2884.9,1307.7 2900.1,1347.0 2915.3,1350.8C2930.5,1354.6 2945.7,1356.5 2960.9,1356.5C2976.1,1356.5 2991.3,1331.6 3006.5,1331.6C3021.7,1331.6 3036.9,1387.4 3052.2,1387.4C3067.4,1387.4 3082.6,1350.3 3097.8,1341.0C3113.0,1331.7 3128.2,1336.3 3143.4,1327.0C3158.6,1317.7 3173.8,1291.2 3189.0,1264.7" fill="none" stroke="#dbbd8e" stroke-width="2.1"/></g><path d="M452,888 V1586 M440,888 H452 M440,1059.5 H452 M440,1231 H452 M440,1402.5 H452 M440,1574 H452" stroke="#8e8f93" stroke-width="2" fill="none"/><path d="M452,1574 H3227" stroke="#8e8f93" stroke-width="2" fill="none"/><path d="M862.5,1574 V1586 M1227.5,1574 V1586 M1592.4,1574 V1586 M1957.3,1574 V1586 M2322.3,1574 V1586 M2687.2,1574 V1586 M3189.0,1574 V1586 " stroke="#8e8f93" stroke-width="2" fill="none"/></svg>
<div class="t" style="right:3164.0px;top:885.3px;font:400 23.1px/23.1px 'Liberation Mono', monospace;color:#8e8f93;letter-spacing:-0.66px;">2M</div>
<div class="t" style="right:3164.0px;top:1049.8px;font:400 23.1px/23.1px 'Liberation Mono', monospace;color:#8e8f93;letter-spacing:-0.66px;">1.5M</div>
<div class="t" style="right:3164.0px;top:1221.3px;font:400 23.1px/23.1px 'Liberation Mono', monospace;color:#8e8f93;letter-spacing:-0.66px;">1M</div>
<div class="t" style="right:3164.0px;top:1392.8px;font:400 23.1px/23.1px 'Liberation Mono', monospace;color:#8e8f93;letter-spacing:-0.66px;">500K</div>
<div class="t" style="right:3164.0px;top:1564.3px;font:400 23.1px/23.1px 'Liberation Mono', monospace;color:#8e8f93;letter-spacing:-0.66px;">0</div>
<div class="t" style="left:363.0px;top:1589.3px;font:400 23.1px/23.1px 'Liberation Mono', monospace;color:#8e8f93;letter-spacing:-0.66px;">Aug 4 3:04:00 PM</div>
<div class="t" style="left:-137.5px;width:2000px;text-align:center;top:1589.3px;font:400 23.1px/23.1px 'Liberation Mono', monospace;color:#8e8f93;letter-spacing:-0.66px;">3:13:00 PM</div>
<div class="t" style="left:227.5px;width:2000px;text-align:center;top:1589.3px;font:400 23.1px/23.1px 'Liberation Mono', monospace;color:#8e8f93;letter-spacing:-0.66px;">3:21:00 PM</div>
<div class="t" style="left:592.4px;width:2000px;text-align:center;top:1589.3px;font:400 23.1px/23.1px 'Liberation Mono', monospace;color:#8e8f93;letter-spacing:-0.66px;">3:29:00 PM</div>
<div class="t" style="left:957.3px;width:2000px;text-align:center;top:1589.3px;font:400 23.1px/23.1px 'Liberation Mono', monospace;color:#8e8f93;letter-spacing:-0.66px;">3:37:00 PM</div>
<div class="t" style="left:1322.3px;width:2000px;text-align:center;top:1589.3px;font:400 23.1px/23.1px 'Liberation Mono', monospace;color:#8e8f93;letter-spacing:-0.66px;">3:45:00 PM</div>
<div class="t" style="left:1687.2px;width:2000px;text-align:center;top:1589.3px;font:400 23.1px/23.1px 'Liberation Mono', monospace;color:#8e8f93;letter-spacing:-0.66px;">3:53:00 PM</div>
<div class="t" style="right:364.0px;top:1589.3px;font:400 23.1px/23.1px 'Liberation Mono', monospace;color:#8e8f93;letter-spacing:-0.66px;">4:04:00 PM</div>
<div class="b" style="left:372px;top:1649px;width:24px;height:2px;background:#33c99b;"></div>
<div class="t" style="left:405.0px;top:1637.3px;font:400 23.1px/23.1px 'Liberation Mono', monospace;color:#33c99b;letter-spacing:-0.66px;">email</div>
<div class="b" style="left:487px;top:1649px;width:24px;height:2px;background:#9266e6;"></div>
<div class="t" style="left:520.0px;top:1637.3px;font:400 23.1px/23.1px 'Liberation Mono', monospace;color:#9266e6;letter-spacing:-0.66px;">fraud-detection</div>
<div class="b" style="left:732px;top:1649px;width:24px;height:2px;background:#dcb986;"></div>
<div class="t" style="left:765.0px;top:1637.3px;font:400 23.1px/23.1px 'Liberation Mono', monospace;color:#dcb986;letter-spacing:-0.66px;">load-generator</div>
<div class="b" style="left:964px;top:1649px;width:24px;height:2px;background:#3b82f6;"></div>
<div class="t" style="left:997.0px;top:1637.3px;font:400 23.1px/23.1px 'Liberation Mono', monospace;color:#3b82f6;letter-spacing:-0.66px;">checkout</div>
<div class="t" style="left:1118.0px;top:1637.3px;font:400 23.1px/23.1px 'Liberation Mono', monospace;color:#a2a5ad;letter-spacing:-0.66px;text-decoration:underline;text-underline-offset:4px;text-decoration-thickness:2px;">+12 more</div>
<div class="b" style="left:3102px;top:879px;width:136px;height:74px;background:#1f252c;border-radius:13px;"></div>
<svg class="s" style="left:3132px;top:899px;" width="32" height="32" viewBox="0 0 32 32"><path d="M2.5,1 V29 H30" fill="none" stroke="#4fe0b0" stroke-width="2.4"/><path d="M6,22 L13,13 L18,18 L26,9" fill="none" stroke="#4fe0b0" stroke-width="2.4"/></svg>
<svg class="s" style="left:3178px;top:902px;" width="30" height="30" viewBox="0 0 30 30"><rect x="2" y="19" width="6" height="8" rx="1.2" fill="none" stroke="#d4d6da" stroke-width="2"/><rect x="11" y="11" width="6" height="16" rx="1.2" fill="none" stroke="#d4d6da" stroke-width="2"/><rect x="20" y="2" width="6" height="25" rx="1.2" fill="none" stroke="#d4d6da" stroke-width="2"/></svg>
<div class="b" style="left:362px;top:1710px;width:2876px;height:2px;background:#2e3035;"></div>
<svg class="s" style="left:392px;top:1743px;" width="34" height="26" viewBox="0 0 34 26"><rect x="1.5" y="1.5" width="30" height="22" rx="3" fill="none" stroke="#c8c9ce" stroke-width="2.2"/><circle cx="8" cy="7.5" r="1.4" fill="#c8c9ce"/><circle cx="8" cy="12.5" r="1.4" fill="#c8c9ce"/><circle cx="8" cy="17.5" r="1.4" fill="#c8c9ce"/><line x1="12" y1="7.5" x2="26" y2="7.5" stroke="#c8c9ce" stroke-width="2"/><line x1="12" y1="12.5" x2="26" y2="12.5" stroke="#c8c9ce" stroke-width="2"/><line x1="12" y1="17.5" x2="26" y2="17.5" stroke="#c8c9ce" stroke-width="2"/></svg>
<div class="t" style="left:449.0px;top:1744.1px;font:400 27.3px/27.3px 'Liberation Mono', monospace;color:#cbccd1;letter-spacing:-0.78px;">Sample Matched Events</div>
<svg class="s" style="left:3178px;top:1745px;" width="24" height="16" viewBox="0 0 24 16"><path d="M3,13 L12,4 L21,13" fill="none" stroke="#c8c9ce" stroke-width="2.2"/></svg>
<div style="position:absolute;left:393px;top:1808px;width:2845px;height:26px;overflow:hidden;background:#1d1e22;">
<div class="t" style="left:42px;top:8.8px;font:700 25px/25px 'Liberation Mono', monospace;letter-spacing:-0.6px;color:#f4f4f6;">Timestamp (Local)</div>
<div class="t" style="left:383px;top:8.8px;font:700 25px/25px 'Liberation Mono', monospace;letter-spacing:-0.6px;color:#f4f4f6;">service</div>
<div class="t" style="left:704px;top:8.8px;font:700 25px/25px 'Liberation Mono', monospace;letter-spacing:-0.6px;color:#f4f4f6;">level</div>
<div class="t" style="left:933px;top:8.8px;font:700 25px/25px 'Liberation Mono', monospace;letter-spacing:-0.6px;color:#f4f4f6;">duration</div>
<div class="t" style="left:1254px;top:8.8px;font:700 25px/25px 'Liberation Mono', monospace;letter-spacing:-0.6px;color:#f4f4f6;">SpanName</div>
<div class="b" style="left:358px;top:5px;width:5px;height:30px;background:radial-gradient(circle,#8d8e93 2.2px,transparent 2.6px) 0 0/5px 9px repeat-y;"></div>
<div class="b" style="left:678px;top:5px;width:5px;height:30px;background:radial-gradient(circle,#8d8e93 2.2px,transparent 2.6px) 0 0/5px 9px repeat-y;"></div>
<div class="b" style="left:908px;top:5px;width:5px;height:30px;background:radial-gradient(circle,#8d8e93 2.2px,transparent 2.6px) 0 0/5px 9px repeat-y;"></div>
<div class="b" style="left:1228px;top:5px;width:5px;height:30px;background:radial-gradient(circle,#8d8e93 2.2px,transparent 2.6px) 0 0/5px 9px repeat-y;"></div>
<svg class="s" style="left:2720px;top:4px" width="90" height="30"><path d="M3,8 H25 M3,16 H21 Q25,16 25,20 Q25,24 21,24 H16" stroke="#d0d0d4" stroke-width="2" fill="none"/><path d="M61,2 V24 M54,17 L61,24 L68,17" stroke="#d0d0d4" stroke-width="2" fill="none"/><circle cx="46" cy="23" r="1.3" fill="#d0d0d4"/><circle cx="76" cy="23" r="1.3" fill="#d0d0d4"/></svg>
</div>
<div class="b" style="left:344px;top:200px;width:680px;height:108px;border:10px solid #fcbb05;box-shadow:1px 3px 5px rgba(0,0,0,.6), inset 2px 5px 9px rgba(0,0,0,.65);"></div>
<div class="b" style="left:342px;top:332px;width:683px;height:103px;border:10px solid #fcbb05;box-shadow:1px 3px 5px rgba(0,0,0,.6), inset 2px 5px 9px rgba(0,0,0,.65);"></div>
<div class="b" style="left:342px;top:496px;width:940px;height:128px;border:10px solid #fcbb05;box-shadow:1px 3px 5px rgba(0,0,0,.6), inset 2px 5px 9px rgba(0,0,0,.65);"></div>
<div class="b" style="left:2464px;top:410px;width:790px;height:216px;border:10px solid #fcbb05;box-shadow:1px 3px 5px rgba(0,0,0,.6), inset 2px 5px 9px rgba(0,0,0,.65);"></div>
</body></html>
